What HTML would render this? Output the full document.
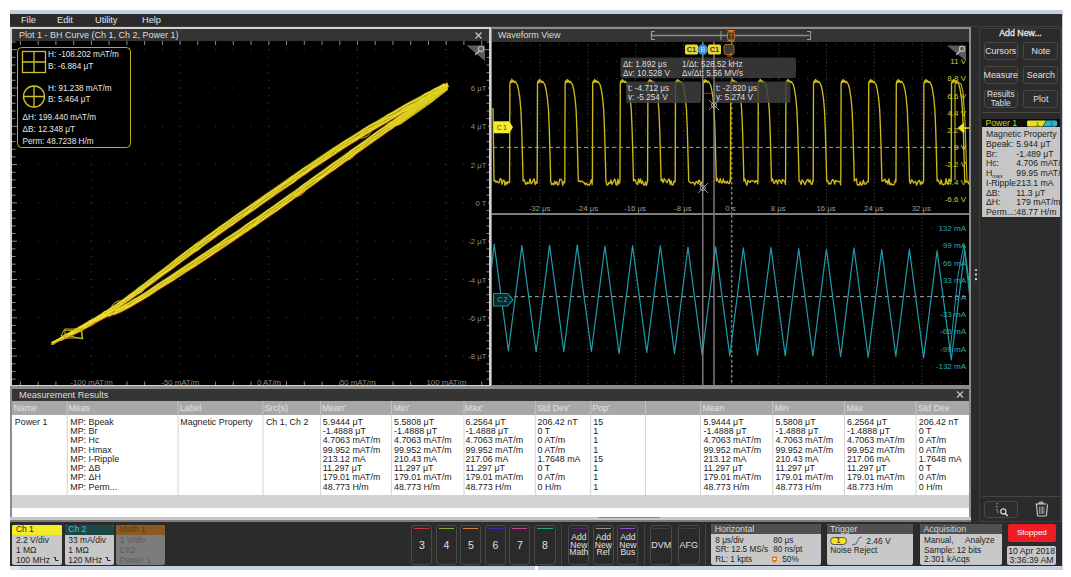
<!DOCTYPE html><html><head><meta charset="utf-8"><style>
html,body{margin:0;padding:0;}
body{width:1071px;height:577px;background:#fff;position:relative;overflow:hidden;font-family:"Liberation Sans", sans-serif;}
div,span,svg{position:absolute;box-sizing:border-box;}
svg text{font-family:"Liberation Sans", sans-serif;}
.t{white-space:pre;line-height:1.2;}

</style></head><body>
<div style="left:10px;top:10px;width:1053.2px;height:4px;background:#c5cfdf;"></div>
<div style="left:1061.6px;top:10px;width:1.6px;height:560px;background:#c5cfdf;"></div>
<div style="left:10px;top:14px;width:1051.6px;height:508px;background:#2b2b2b;"></div>
<span class="t" style="left:21px;top:15.48px;font-size:9.2px;color:#e4e4e4;">File</span>
<span class="t" style="left:57px;top:15.48px;font-size:9.2px;color:#e4e4e4;">Edit</span>
<span class="t" style="left:95px;top:15.48px;font-size:9.2px;color:#e4e4e4;">Utility</span>
<span class="t" style="left:142px;top:15.48px;font-size:9.2px;color:#e4e4e4;">Help</span>
<div style="left:10px;top:26.3px;width:1051.6px;height:1.2px;background:#3e3b38;"></div>
<div style="left:10px;top:27px;width:480.6px;height:359.3px;background:#d2d2d2;"></div>
<div style="left:12px;top:29px;width:477px;height:12px;background:#343434;"></div>
<div style="left:12px;top:41px;width:477px;height:343.8px;background:#000;"></div>
<span class="t" style="left:19px;top:30.10px;font-size:9.0px;color:#dcdcdc;">Plot 1 - BH Curve (Ch 1, Ch 2, Power 1)</span>
<svg style="left:10px;top:27px;" width="481" height="361" viewBox="10 27 481 361">
<path d="M475.5 32.5l6 6M481.5 32.5l-6 6" stroke="#c8c8c8" stroke-width="1.2"/>
<path d="M90.8 42.0h1M90.8 49.7h1M90.8 57.4h1M90.8 65.0h1M90.8 72.7h1M90.8 80.3h1M90.8 88.0h1M90.8 95.7h1M90.8 103.3h1M90.8 111.0h1M90.8 118.6h1M90.8 126.3h1M90.8 134.0h1M90.8 141.6h1M90.8 149.3h1M90.8 156.9h1M90.8 164.6h1M90.8 172.3h1M90.8 179.9h1M90.8 187.6h1M90.8 195.2h1M90.8 202.9h1M90.8 210.6h1M90.8 218.2h1M90.8 225.9h1M90.8 233.5h1M90.8 241.2h1M90.8 248.9h1M90.8 256.5h1M90.8 264.2h1M90.8 271.8h1M90.8 279.5h1M90.8 287.2h1M90.8 294.8h1M90.8 302.5h1M90.8 310.1h1M90.8 317.8h1M90.8 325.5h1M90.8 333.1h1M90.8 340.8h1M90.8 348.4h1M90.8 356.1h1M90.8 363.8h1M90.8 371.4h1M90.8 379.1h1M179.5 42.0h1M179.5 49.7h1M179.5 57.4h1M179.5 65.0h1M179.5 72.7h1M179.5 80.3h1M179.5 88.0h1M179.5 95.7h1M179.5 103.3h1M179.5 111.0h1M179.5 118.6h1M179.5 126.3h1M179.5 134.0h1M179.5 141.6h1M179.5 149.3h1M179.5 156.9h1M179.5 164.6h1M179.5 172.3h1M179.5 179.9h1M179.5 187.6h1M179.5 195.2h1M179.5 202.9h1M179.5 210.6h1M179.5 218.2h1M179.5 225.9h1M179.5 233.5h1M179.5 241.2h1M179.5 248.9h1M179.5 256.5h1M179.5 264.2h1M179.5 271.8h1M179.5 279.5h1M179.5 287.2h1M179.5 294.8h1M179.5 302.5h1M179.5 310.1h1M179.5 317.8h1M179.5 325.5h1M179.5 333.1h1M179.5 340.8h1M179.5 348.4h1M179.5 356.1h1M179.5 363.8h1M179.5 371.4h1M179.5 379.1h1M268.2 42.0h1M268.2 49.7h1M268.2 57.4h1M268.2 65.0h1M268.2 72.7h1M268.2 80.3h1M268.2 88.0h1M268.2 95.7h1M268.2 103.3h1M268.2 111.0h1M268.2 118.6h1M268.2 126.3h1M268.2 134.0h1M268.2 141.6h1M268.2 149.3h1M268.2 156.9h1M268.2 164.6h1M268.2 172.3h1M268.2 179.9h1M268.2 187.6h1M268.2 195.2h1M268.2 202.9h1M268.2 210.6h1M268.2 218.2h1M268.2 225.9h1M268.2 233.5h1M268.2 241.2h1M268.2 248.9h1M268.2 256.5h1M268.2 264.2h1M268.2 271.8h1M268.2 279.5h1M268.2 287.2h1M268.2 294.8h1M268.2 302.5h1M268.2 310.1h1M268.2 317.8h1M268.2 325.5h1M268.2 333.1h1M268.2 340.8h1M268.2 348.4h1M268.2 356.1h1M268.2 363.8h1M268.2 371.4h1M268.2 379.1h1M356.9 42.0h1M356.9 49.7h1M356.9 57.4h1M356.9 65.0h1M356.9 72.7h1M356.9 80.3h1M356.9 88.0h1M356.9 95.7h1M356.9 103.3h1M356.9 111.0h1M356.9 118.6h1M356.9 126.3h1M356.9 134.0h1M356.9 141.6h1M356.9 149.3h1M356.9 156.9h1M356.9 164.6h1M356.9 172.3h1M356.9 179.9h1M356.9 187.6h1M356.9 195.2h1M356.9 202.9h1M356.9 210.6h1M356.9 218.2h1M356.9 225.9h1M356.9 233.5h1M356.9 241.2h1M356.9 248.9h1M356.9 256.5h1M356.9 264.2h1M356.9 271.8h1M356.9 279.5h1M356.9 287.2h1M356.9 294.8h1M356.9 302.5h1M356.9 310.1h1M356.9 317.8h1M356.9 325.5h1M356.9 333.1h1M356.9 340.8h1M356.9 348.4h1M356.9 356.1h1M356.9 363.8h1M356.9 371.4h1M356.9 379.1h1M445.6 42.0h1M445.6 49.7h1M445.6 57.4h1M445.6 65.0h1M445.6 72.7h1M445.6 80.3h1M445.6 88.0h1M445.6 95.7h1M445.6 103.3h1M445.6 111.0h1M445.6 118.6h1M445.6 126.3h1M445.6 134.0h1M445.6 141.6h1M445.6 149.3h1M445.6 156.9h1M445.6 164.6h1M445.6 172.3h1M445.6 179.9h1M445.6 187.6h1M445.6 195.2h1M445.6 202.9h1M445.6 210.6h1M445.6 218.2h1M445.6 225.9h1M445.6 233.5h1M445.6 241.2h1M445.6 248.9h1M445.6 256.5h1M445.6 264.2h1M445.6 271.8h1M445.6 279.5h1M445.6 287.2h1M445.6 294.8h1M445.6 302.5h1M445.6 310.1h1M445.6 317.8h1M445.6 325.5h1M445.6 333.1h1M445.6 340.8h1M445.6 348.4h1M445.6 356.1h1M445.6 363.8h1M445.6 371.4h1M445.6 379.1h1M20.2 49.7h1M37.9 49.7h1M55.6 49.7h1M73.3 49.7h1M91.0 49.7h1M108.8 49.7h1M126.5 49.7h1M144.2 49.7h1M161.9 49.7h1M179.6 49.7h1M197.3 49.7h1M215.0 49.7h1M232.7 49.7h1M250.4 49.7h1M268.1 49.7h1M285.9 49.7h1M303.6 49.7h1M321.3 49.7h1M339.0 49.7h1M356.7 49.7h1M374.4 49.7h1M392.1 49.7h1M409.8 49.7h1M427.5 49.7h1M445.2 49.7h1M462.9 49.7h1M480.7 49.7h1M20.2 88.0h1M37.9 88.0h1M55.6 88.0h1M73.3 88.0h1M91.0 88.0h1M108.8 88.0h1M126.5 88.0h1M144.2 88.0h1M161.9 88.0h1M179.6 88.0h1M197.3 88.0h1M215.0 88.0h1M232.7 88.0h1M250.4 88.0h1M268.1 88.0h1M285.9 88.0h1M303.6 88.0h1M321.3 88.0h1M339.0 88.0h1M356.7 88.0h1M374.4 88.0h1M392.1 88.0h1M409.8 88.0h1M427.5 88.0h1M445.2 88.0h1M462.9 88.0h1M480.7 88.0h1M20.2 126.3h1M37.9 126.3h1M55.6 126.3h1M73.3 126.3h1M91.0 126.3h1M108.8 126.3h1M126.5 126.3h1M144.2 126.3h1M161.9 126.3h1M179.6 126.3h1M197.3 126.3h1M215.0 126.3h1M232.7 126.3h1M250.4 126.3h1M268.1 126.3h1M285.9 126.3h1M303.6 126.3h1M321.3 126.3h1M339.0 126.3h1M356.7 126.3h1M374.4 126.3h1M392.1 126.3h1M409.8 126.3h1M427.5 126.3h1M445.2 126.3h1M462.9 126.3h1M480.7 126.3h1M20.2 164.6h1M37.9 164.6h1M55.6 164.6h1M73.3 164.6h1M91.0 164.6h1M108.8 164.6h1M126.5 164.6h1M144.2 164.6h1M161.9 164.6h1M179.6 164.6h1M197.3 164.6h1M215.0 164.6h1M232.7 164.6h1M250.4 164.6h1M268.1 164.6h1M285.9 164.6h1M303.6 164.6h1M321.3 164.6h1M339.0 164.6h1M356.7 164.6h1M374.4 164.6h1M392.1 164.6h1M409.8 164.6h1M427.5 164.6h1M445.2 164.6h1M462.9 164.6h1M480.7 164.6h1M20.2 202.9h1M37.9 202.9h1M55.6 202.9h1M73.3 202.9h1M91.0 202.9h1M108.8 202.9h1M126.5 202.9h1M144.2 202.9h1M161.9 202.9h1M179.6 202.9h1M197.3 202.9h1M215.0 202.9h1M232.7 202.9h1M250.4 202.9h1M268.1 202.9h1M285.9 202.9h1M303.6 202.9h1M321.3 202.9h1M339.0 202.9h1M356.7 202.9h1M374.4 202.9h1M392.1 202.9h1M409.8 202.9h1M427.5 202.9h1M445.2 202.9h1M462.9 202.9h1M480.7 202.9h1M20.2 241.2h1M37.9 241.2h1M55.6 241.2h1M73.3 241.2h1M91.0 241.2h1M108.8 241.2h1M126.5 241.2h1M144.2 241.2h1M161.9 241.2h1M179.6 241.2h1M197.3 241.2h1M215.0 241.2h1M232.7 241.2h1M250.4 241.2h1M268.1 241.2h1M285.9 241.2h1M303.6 241.2h1M321.3 241.2h1M339.0 241.2h1M356.7 241.2h1M374.4 241.2h1M392.1 241.2h1M409.8 241.2h1M427.5 241.2h1M445.2 241.2h1M462.9 241.2h1M480.7 241.2h1M20.2 279.5h1M37.9 279.5h1M55.6 279.5h1M73.3 279.5h1M91.0 279.5h1M108.8 279.5h1M126.5 279.5h1M144.2 279.5h1M161.9 279.5h1M179.6 279.5h1M197.3 279.5h1M215.0 279.5h1M232.7 279.5h1M250.4 279.5h1M268.1 279.5h1M285.9 279.5h1M303.6 279.5h1M321.3 279.5h1M339.0 279.5h1M356.7 279.5h1M374.4 279.5h1M392.1 279.5h1M409.8 279.5h1M427.5 279.5h1M445.2 279.5h1M462.9 279.5h1M480.7 279.5h1M20.2 317.8h1M37.9 317.8h1M55.6 317.8h1M73.3 317.8h1M91.0 317.8h1M108.8 317.8h1M126.5 317.8h1M144.2 317.8h1M161.9 317.8h1M179.6 317.8h1M197.3 317.8h1M215.0 317.8h1M232.7 317.8h1M250.4 317.8h1M268.1 317.8h1M285.9 317.8h1M303.6 317.8h1M321.3 317.8h1M339.0 317.8h1M356.7 317.8h1M374.4 317.8h1M392.1 317.8h1M409.8 317.8h1M427.5 317.8h1M445.2 317.8h1M462.9 317.8h1M480.7 317.8h1M20.2 356.1h1M37.9 356.1h1M55.6 356.1h1M73.3 356.1h1M91.0 356.1h1M108.8 356.1h1M126.5 356.1h1M144.2 356.1h1M161.9 356.1h1M179.6 356.1h1M197.3 356.1h1M215.0 356.1h1M232.7 356.1h1M250.4 356.1h1M268.1 356.1h1M285.9 356.1h1M303.6 356.1h1M321.3 356.1h1M339.0 356.1h1M356.7 356.1h1M374.4 356.1h1M392.1 356.1h1M409.8 356.1h1M427.5 356.1h1M445.2 356.1h1M462.9 356.1h1M480.7 356.1h1" stroke="#444" stroke-width="1" fill="none"/>
<path d="M20.4 41v4M20.4 385v-3.5M38.2 41v4M38.2 385v-3.5M55.9 41v4M55.9 385v-3.5M73.7 41v4M73.7 385v-3.5M91.4 41v4M91.4 385v-3.5M109.1 41v4M109.1 385v-3.5M126.9 41v4M126.9 385v-3.5M144.6 41v4M144.6 385v-3.5M162.4 41v4M162.4 385v-3.5M180.1 41v4M180.1 385v-3.5M197.8 41v4M197.8 385v-3.5M215.6 41v4M215.6 385v-3.5M233.3 41v4M233.3 385v-3.5M251.1 41v4M251.1 385v-3.5M268.8 41v4M268.8 385v-3.5M286.5 41v4M286.5 385v-3.5M304.3 41v4M304.3 385v-3.5M322.0 41v4M322.0 385v-3.5M339.8 41v4M339.8 385v-3.5M357.5 41v4M357.5 385v-3.5M375.2 41v4M375.2 385v-3.5M393.0 41v4M393.0 385v-3.5M410.7 41v4M410.7 385v-3.5M428.5 41v4M428.5 385v-3.5M446.2 41v4M446.2 385v-3.5M463.9 41v4M463.9 385v-3.5M481.7 41v4M481.7 385v-3.5M12 42.0h3.5M489 42.0h-2.5M12 49.7h5M489 49.7h-4M12 57.4h3.5M489 57.4h-2.5M12 65.0h3.5M489 65.0h-2.5M12 72.7h3.5M489 72.7h-2.5M12 80.3h3.5M489 80.3h-2.5M12 88.0h5M489 88.0h-4M12 95.7h3.5M489 95.7h-2.5M12 103.3h3.5M489 103.3h-2.5M12 111.0h3.5M489 111.0h-2.5M12 118.6h3.5M489 118.6h-2.5M12 126.3h5M489 126.3h-4M12 134.0h3.5M489 134.0h-2.5M12 141.6h3.5M489 141.6h-2.5M12 149.3h3.5M489 149.3h-2.5M12 156.9h3.5M489 156.9h-2.5M12 164.6h5M489 164.6h-4M12 172.3h3.5M489 172.3h-2.5M12 179.9h3.5M489 179.9h-2.5M12 187.6h3.5M489 187.6h-2.5M12 195.2h3.5M489 195.2h-2.5M12 202.9h5M489 202.9h-4M12 210.6h3.5M489 210.6h-2.5M12 218.2h3.5M489 218.2h-2.5M12 225.9h3.5M489 225.9h-2.5M12 233.5h3.5M489 233.5h-2.5M12 241.2h5M489 241.2h-4M12 248.9h3.5M489 248.9h-2.5M12 256.5h3.5M489 256.5h-2.5M12 264.2h3.5M489 264.2h-2.5M12 271.8h3.5M489 271.8h-2.5M12 279.5h5M489 279.5h-4M12 287.2h3.5M489 287.2h-2.5M12 294.8h3.5M489 294.8h-2.5M12 302.5h3.5M489 302.5h-2.5M12 310.1h3.5M489 310.1h-2.5M12 317.8h5M489 317.8h-4M12 325.5h3.5M489 325.5h-2.5M12 333.1h3.5M489 333.1h-2.5M12 340.8h3.5M489 340.8h-2.5M12 348.4h3.5M489 348.4h-2.5M12 356.1h5M489 356.1h-4M12 363.8h3.5M489 363.8h-2.5M12 371.4h3.5M489 371.4h-2.5M12 379.1h3.5M489 379.1h-2.5" stroke="#8a8a8a" stroke-width="1" fill="none"/>
<rect x="469" y="83.0" width="19" height="10" fill="#000"/>
<text x="486.5" y="91.0" font-size="7.8" fill="#8c8c8c" text-anchor="end">6 μT</text>
<rect x="469" y="121.3" width="19" height="10" fill="#000"/>
<text x="486.5" y="129.3" font-size="7.8" fill="#8c8c8c" text-anchor="end">4 μT</text>
<rect x="469" y="159.6" width="19" height="10" fill="#000"/>
<text x="486.5" y="167.6" font-size="7.8" fill="#8c8c8c" text-anchor="end">2 μT</text>
<rect x="473" y="197.89999999999998" width="15" height="10" fill="#000"/>
<text x="486.5" y="205.9" font-size="7.8" fill="#8c8c8c" text-anchor="end">0 T</text>
<rect x="464" y="236.2" width="24" height="10" fill="#000"/>
<text x="486.5" y="244.2" font-size="7.8" fill="#8c8c8c" text-anchor="end">-2 μT</text>
<rect x="464" y="274.5" width="24" height="10" fill="#000"/>
<text x="486.5" y="282.5" font-size="7.8" fill="#8c8c8c" text-anchor="end">-4 μT</text>
<rect x="464" y="312.79999999999995" width="24" height="10" fill="#000"/>
<text x="486.5" y="320.8" font-size="7.8" fill="#8c8c8c" text-anchor="end">-6 μT</text>
<rect x="464" y="351.09999999999997" width="24" height="10" fill="#000"/>
<text x="486.5" y="359.1" font-size="7.8" fill="#8c8c8c" text-anchor="end">-8 μT</text>
<rect x="69.6" y="377" width="44.0" height="8" fill="#000"/>
<text x="91.6" y="384.5" font-size="7.8" fill="#8c8c8c" text-anchor="middle">-100 mAT/m</text>
<rect x="160.4" y="377" width="39.8" height="8" fill="#000"/>
<text x="180.3" y="384.5" font-size="7.8" fill="#8c8c8c" text-anchor="middle">-50 mAT/m</text>
<rect x="255.4" y="377" width="27.2" height="8" fill="#000"/>
<text x="269.0" y="384.5" font-size="7.8" fill="#8c8c8c" text-anchor="middle">0 AT/m</text>
<rect x="339.9" y="377" width="35.6" height="8" fill="#000"/>
<text x="357.7" y="384.5" font-size="7.8" fill="#8c8c8c" text-anchor="middle">50 mAT/m</text>
<rect x="426.5" y="377" width="39.8" height="8" fill="#000"/>
<text x="446.4" y="384.5" font-size="7.8" fill="#8c8c8c" text-anchor="middle">100 mAT/m</text>
<path d="M466.5 45.5H485V61z" fill="#5c5c5c"/><circle cx="481" cy="48.8" r="2.6" stroke="#bdbdbd" stroke-width="1.1" fill="none"/><path d="M479.2 50.8l-4 4" stroke="#bdbdbd" stroke-width="1.3"/>
<polygon points="52.7,344.8 54.3,343.9 56.3,342.8 58.6,341.5 61.3,340.0 64.2,338.5 67.2,336.9 70.3,335.3 73.3,333.7 76.2,332.1 79.0,330.7 81.5,329.4 84.0,328.1 86.6,326.8 89.1,325.5 91.6,324.3 94.1,323.0 96.6,321.6 99.2,320.3 101.8,318.8 104.4,317.3 106.8,315.8 109.0,314.6 111.0,313.3 113.1,312.1 115.2,310.8 117.6,309.2 120.3,307.4 123.5,305.2 127.3,302.6 131.8,299.4 137.1,295.6 143.1,291.1 149.8,286.2 157.0,280.9 164.4,275.3 172.1,269.6 179.9,263.9 187.6,258.2 195.0,252.7 202.2,247.6 209.0,242.6 215.8,237.7 222.6,232.8 229.3,228.0 236.0,223.3 242.7,218.5 249.5,213.7 256.3,209.0 263.2,204.2 270.1,199.3 277.2,194.4 284.4,189.4 291.8,184.3 299.2,179.1 306.6,174.0 314.0,169.0 321.2,164.1 328.4,159.3 335.3,154.7 342.0,150.3 348.5,146.1 355.0,142.1 361.3,138.2 367.5,134.4 373.5,130.8 379.5,127.2 385.3,123.8 390.9,120.5 396.5,117.3 401.8,114.2 407.2,111.2 412.6,108.1 418.1,105.1 423.4,102.2 428.5,99.5 433.3,96.9 437.8,94.6 441.7,92.5 445.1,90.7 447.8,89.3 444.2,82.7 441.6,84.2 438.2,86.0 434.3,88.0 429.8,90.4 425.0,93.0 419.9,95.7 414.5,98.6 409.0,101.6 403.6,104.7 398.2,107.8 392.8,110.9 387.2,114.1 381.5,117.4 375.7,120.9 369.7,124.4 363.6,128.1 357.4,131.9 351.0,135.8 344.6,139.9 338.0,144.1 331.2,148.5 324.3,153.1 317.1,157.9 309.8,162.9 302.4,167.9 295.0,173.1 287.6,178.2 280.2,183.3 273.0,188.3 265.9,193.3 258.9,198.1 252.1,202.9 245.2,207.7 238.5,212.5 231.7,217.2 225.0,222.0 218.3,226.8 211.5,231.7 204.7,236.6 197.8,241.6 190.7,246.9 183.3,252.5 175.7,258.3 168.0,264.2 160.4,270.1 153.0,275.7 146.0,281.2 139.4,286.2 133.5,290.7 128.2,294.6 123.8,297.8 120.1,300.5 117.1,302.7 114.4,304.5 112.2,306.0 110.1,307.4 108.1,308.6 106.2,309.9 104.0,311.2 101.6,312.7 99.1,314.3 96.6,315.8 94.2,317.3 91.7,318.8 89.3,320.2 86.9,321.6 84.5,323.0 82.0,324.4 79.5,325.8 77.0,327.3 74.4,328.8 71.6,330.5 68.6,332.3 65.6,334.0 62.7,335.8 59.9,337.4 57.2,338.9 54.8,340.3 52.8,341.4 51.3,342.2" fill="#5a5008"/>
<polygon points="52.6,344.8 54.2,344.1 56.2,343.1 58.5,342.0 61.2,340.8 64.1,339.6 67.1,338.2 70.2,336.8 73.3,335.5 76.2,334.1 78.9,332.7 81.5,331.4 84.1,330.0 86.6,328.6 89.2,327.2 91.7,325.7 94.1,324.3 96.6,322.9 99.2,321.5 101.7,320.2 104.2,318.9 106.5,317.8 108.6,317.0 110.5,316.4 112.5,315.8 114.6,315.1 117.0,314.2 119.8,313.1 123.1,311.6 127.0,309.6 131.5,307.1 136.8,303.9 142.9,300.2 149.6,296.1 156.8,291.6 164.2,286.9 171.9,281.9 179.7,276.9 187.4,272.0 194.9,267.1 202.0,262.5 208.9,257.9 215.7,253.4 222.5,248.9 229.2,244.4 235.9,239.8 242.7,235.2 249.5,230.6 256.3,225.9 263.2,221.2 270.1,216.3 277.2,211.4 284.5,206.2 291.8,201.0 299.2,195.7 306.7,190.3 314.0,185.0 321.3,179.8 328.5,174.6 335.4,169.6 342.2,164.8 348.7,160.1 355.1,155.5 361.5,151.0 367.7,146.6 373.8,142.3 379.7,138.0 385.6,133.9 391.2,129.8 396.8,125.9 402.2,122.0 407.5,118.2 413.0,114.3 418.4,110.3 423.8,106.5 428.9,102.8 433.7,99.4 438.2,96.2 442.1,93.3 445.5,90.9 448.2,89.0 443.8,83.0 441.2,84.9 437.8,87.3 433.9,90.2 429.4,93.3 424.6,96.8 419.5,100.5 414.1,104.3 408.7,108.2 403.2,112.1 397.8,116.0 392.5,119.8 386.9,123.8 381.3,127.8 375.4,132.0 369.5,136.2 363.4,140.6 357.2,145.0 350.8,149.5 344.4,154.1 337.8,158.8 331.1,163.6 324.1,168.6 317.0,173.8 309.7,179.0 302.3,184.3 294.9,189.7 287.5,195.0 280.2,200.2 273.0,205.3 265.9,210.3 258.9,215.1 252.1,219.8 245.3,224.5 238.5,229.1 231.8,233.7 225.1,238.2 218.4,242.7 211.6,247.3 204.8,251.8 198.0,256.3 190.9,261.1 183.5,266.0 175.9,271.1 168.2,276.3 160.6,281.3 153.2,286.2 146.2,290.8 139.6,295.0 133.7,298.7 128.5,301.9 124.1,304.5 120.5,306.4 117.5,307.8 115.0,308.9 112.8,309.8 110.7,310.5 108.7,311.1 106.6,311.9 104.3,312.9 101.8,314.1 99.2,315.6 96.6,317.1 94.1,318.6 91.7,320.2 89.2,321.7 86.8,323.3 84.4,324.8 82.0,326.4 79.5,327.8 77.1,329.3 74.5,330.7 71.6,332.2 68.7,333.7 65.7,335.3 62.8,336.8 60.0,338.2 57.3,339.4 54.9,340.5 52.9,341.5 51.4,342.2" fill="#5a5008"/>
<polygon points="52.4,344.2 53.9,343.3 55.9,342.2 58.3,340.9 60.9,339.4 63.9,337.9 66.9,336.3 70.0,334.7 73.0,333.1 75.9,331.5 78.6,330.1 81.2,328.8 83.7,327.5 86.2,326.2 88.7,324.9 91.2,323.7 93.7,322.4 96.3,321.0 98.8,319.7 101.4,318.2 104.0,316.7 106.5,315.2 108.6,314.0 110.7,312.7 112.7,311.5 114.8,310.2 117.2,308.6 119.9,306.8 123.1,304.7 126.9,302.0 131.3,298.8 136.7,295.0 142.7,290.6 149.4,285.6 156.5,280.3 164.0,274.8 171.7,269.1 179.5,263.3 187.1,257.7 194.6,252.2 201.8,247.0 208.6,242.0 215.4,237.1 222.2,232.3 228.9,227.5 235.6,222.7 242.3,217.9 249.1,213.2 255.9,208.4 262.8,203.6 269.7,198.8 276.8,193.8 284.0,188.8 291.4,183.7 298.8,178.6 306.2,173.5 313.6,168.4 320.8,163.5 328.0,158.7 334.9,154.1 341.6,149.7 348.2,145.5 354.6,141.5 360.9,137.6 367.1,133.8 373.2,130.2 379.1,126.6 384.9,123.2 390.6,119.9 396.1,116.7 401.5,113.6 406.8,110.5 412.3,107.5 417.7,104.5 423.0,101.6 428.2,98.9 433.0,96.3 437.4,94.0 441.4,91.9 444.7,90.1 447.4,88.6 444.6,83.4 441.9,84.8 438.6,86.6 434.6,88.7 430.2,91.0 425.3,93.6 420.2,96.4 414.8,99.3 409.4,102.3 403.9,105.3 398.5,108.4 393.1,111.5 387.6,114.7 381.9,118.0 376.1,121.5 370.1,125.0 364.0,128.7 357.8,132.5 351.4,136.4 344.9,140.5 338.4,144.7 331.6,149.1 324.6,153.7 317.5,158.5 310.2,163.5 302.8,168.5 295.4,173.6 288.0,178.8 280.6,183.9 273.4,188.9 266.3,193.8 259.3,198.7 252.5,203.5 245.6,208.3 238.9,213.0 232.1,217.8 225.4,222.6 218.7,227.4 211.9,232.3 205.1,237.2 198.2,242.2 191.1,247.5 183.7,253.1 176.1,258.9 168.5,264.8 160.9,270.6 153.5,276.3 146.4,281.7 139.8,286.7 133.9,291.3 128.7,295.2 124.2,298.4 120.6,301.1 117.4,303.3 114.8,305.1 112.5,306.6 110.5,308.0 108.5,309.2 106.5,310.5 104.4,311.8 102.0,313.3 99.4,314.9 97.0,316.4 94.5,317.9 92.1,319.4 89.7,320.8 87.2,322.2 84.8,323.6 82.4,325.0 79.9,326.4 77.4,327.9 74.7,329.5 71.9,331.1 69.0,332.9 66.0,334.6 63.0,336.4 60.2,338.1 57.6,339.5 55.2,340.9 53.2,342.0 51.6,342.8" fill="#b8aa14"/>
<polygon points="52.3,344.2 53.9,343.4 55.9,342.5 58.2,341.4 60.9,340.2 63.8,338.9 66.8,337.6 69.9,336.2 72.9,334.8 75.9,333.5 78.6,332.1 81.2,330.8 83.7,329.4 86.3,328.0 88.8,326.6 91.3,325.1 93.8,323.7 96.3,322.3 98.8,320.9 101.3,319.6 103.9,318.3 106.2,317.2 108.3,316.4 110.3,315.7 112.2,315.1 114.4,314.4 116.8,313.5 119.6,312.4 122.8,310.9 126.6,309.0 131.2,306.5 136.5,303.3 142.5,299.6 149.2,295.5 156.4,291.0 163.9,286.3 171.6,281.4 179.3,276.4 187.0,271.4 194.5,266.5 201.7,261.9 208.5,257.4 215.3,252.8 222.1,248.3 228.8,243.8 235.6,239.2 242.3,234.7 249.1,230.0 255.9,225.4 262.8,220.6 269.7,215.8 276.8,210.8 284.1,205.7 291.4,200.4 298.8,195.1 306.3,189.8 313.6,184.5 320.9,179.2 328.1,174.1 335.0,169.1 341.7,164.2 348.3,159.6 354.7,155.0 361.1,150.5 367.3,146.0 373.4,141.7 379.3,137.4 385.1,133.3 390.8,129.2 396.4,125.3 401.7,121.4 407.1,117.6 412.6,113.7 418.0,109.8 423.4,105.9 428.5,102.3 433.3,98.8 437.8,95.6 441.7,92.8 445.1,90.4 447.7,88.4 444.3,83.6 441.6,85.5 438.2,87.9 434.3,90.7 429.8,93.9 425.0,97.4 419.9,101.1 414.5,104.9 409.1,108.8 403.6,112.7 398.3,116.6 392.9,120.4 387.3,124.4 381.7,128.4 375.8,132.6 369.9,136.8 363.8,141.1 357.6,145.6 351.2,150.1 344.8,154.7 338.3,159.4 331.5,164.2 324.6,169.2 317.4,174.3 310.1,179.6 302.7,184.9 295.3,190.2 287.9,195.5 280.6,200.8 273.4,205.9 266.3,210.8 259.3,215.7 252.5,220.4 245.7,225.1 238.9,229.7 232.2,234.3 225.5,238.8 218.8,243.3 212.0,247.8 205.2,252.4 198.3,256.9 191.3,261.7 183.9,266.6 176.3,271.7 168.6,276.8 161.0,281.9 153.6,286.8 146.6,291.4 140.0,295.6 134.1,299.3 128.8,302.5 124.5,305.1 120.8,307.0 117.8,308.5 115.2,309.6 113.0,310.4 110.9,311.1 108.9,311.8 106.9,312.6 104.6,313.5 102.1,314.7 99.5,316.2 97.0,317.7 94.5,319.2 92.0,320.8 89.6,322.3 87.2,323.9 84.7,325.4 82.3,327.0 79.9,328.4 77.4,329.9 74.8,331.3 72.0,332.8 69.0,334.4 66.0,335.9 63.1,337.4 60.3,338.8 57.6,340.1 55.2,341.2 53.2,342.1 51.7,342.8" fill="#b8aa14"/>
<polyline points="52.1,343.7 54.0,343.4 56.0,342.2 58.1,340.5 60.9,339.2 63.7,337.6 66.8,336.2 70.0,334.7 72.7,332.5 75.5,330.9 78.6,330.1 81.0,328.4 83.7,327.4 85.8,325.4 88.5,324.5 91.1,323.5 93.4,321.7 96.3,321.0 98.8,319.6 100.9,317.4 103.5,315.9 106.2,314.8 108.6,313.9 110.3,312.2 112.3,310.8 114.5,309.7 116.6,307.8 119.4,306.2 122.7,304.2 126.5,301.6 130.8,298.2 136.1,294.3 142.2,289.9 149.0,285.1 156.0,279.7 163.3,273.9 171.5,268.8 179.1,262.8 186.8,257.2 194.0,251.3 201.6,246.8 208.4,241.7 214.8,236.2 221.6,231.5 228.6,227.0 235.3,222.3 242.2,217.7 248.6,212.5 255.7,208.1 262.4,203.1 269.2,198.0 276.4,193.3 283.8,188.5 291.2,183.4 298.4,178.0 305.8,172.9 312.9,167.4 320.3,162.7 327.7,158.3 334.5,153.4 341.0,148.8 347.8,144.9 354.3,141.0 360.6,137.1 366.6,133.1 372.7,129.5 378.7,126.0 384.7,122.8 390.2,119.3 395.7,116.0 401.1,112.9 406.2,109.5 411.7,106.5 417.5,104.0 422.9,101.4 427.9,98.3 432.6,95.6 436.9,93.0 441.0,91.2 444.6,89.8 447.2,88.2" stroke="#f4e838" stroke-width="1.2" fill="none"/>
<polyline points="51.6,342.8 53.3,342.2 55.2,340.9 57.7,339.8 60.4,338.3 62.9,336.2 65.8,334.4 69.2,333.4 71.9,331.2 74.8,329.5 77.8,328.6 80.0,326.7 82.7,325.6 85.0,323.9 87.5,322.6 89.7,320.8 92.3,319.9 94.9,318.6 97.2,316.9 99.8,315.5 102.3,313.9 104.4,311.8 106.9,311.1 108.8,309.7 110.7,308.2 112.6,306.7 115.3,305.8 117.7,303.7 121.0,301.7 124.8,299.2 129.1,295.8 134.5,292.1 140.1,287.1 147.0,282.4 153.8,276.8 161.5,271.5 169.1,265.6 176.3,259.1 183.9,253.4 191.4,247.8 198.9,243.2 205.5,237.7 212.4,233.0 219.0,227.8 225.9,223.2 232.5,218.3 239.2,213.5 246.1,208.9 252.9,204.2 260.0,199.6 266.8,194.6 274.1,189.9 281.3,184.8 288.7,179.8 295.9,174.4 303.0,168.9 310.8,164.4 318.2,159.5 325.3,154.7 332.1,149.8 338.9,145.5 345.2,140.9 352.0,137.3 358.2,133.2 364.3,129.1 370.2,125.3 376.6,122.4 382.5,119.1 387.7,115.0 393.6,112.4 398.8,109.0 404.1,105.7 409.6,102.7 415.3,100.2 420.7,97.3 425.5,93.9 430.6,91.8 434.8,88.9 439.0,87.4 442.2,85.3 445.1,84.4" stroke="#f0e030" stroke-width="1.2" fill="none"/>
<polyline points="52.0,343.5 53.5,342.5 55.3,341.0 58.3,340.8 60.2,338.0 63.5,337.2 66.8,336.2 69.1,333.2 72.5,332.3 75.5,330.8 77.7,328.4 80.5,327.5 83.3,326.7 85.5,324.9 88.2,324.0 90.2,321.8 92.8,320.6 95.1,319.0 98.0,318.2 100.9,317.4 103.2,315.3 105.8,314.1 107.6,312.2 109.9,311.5 111.3,309.3 113.6,308.3 116.3,307.3 119.0,305.6 121.9,302.9 125.2,299.8 129.9,296.8 135.1,292.9 141.2,288.5 148.4,284.3 154.8,278.1 163.0,273.5 170.7,267.7 177.5,260.7 185.5,255.4 193.1,250.1 199.7,244.1 207.0,239.7 214.3,235.5 220.2,229.5 227.4,225.4 233.7,219.9 240.9,215.8 248.0,211.5 254.0,205.8 260.7,200.7 267.7,195.9 275.3,191.7 282.0,185.9 289.4,180.9 297.3,176.3 305.1,171.9 312.0,166.1 319.2,161.1 326.6,156.7 333.0,151.2 340.2,147.6 346.4,142.8 353.3,139.4 359.9,136.0 365.3,130.8 371.8,127.9 377.8,124.5 383.2,120.3 389.0,117.2 395.2,115.1 400.6,112.0 405.2,107.6 411.2,105.5 416.8,102.9 421.5,98.8 427.0,96.7 431.3,93.2 436.0,91.4 440.3,89.8 443.5,87.8 446.4,86.7" stroke="#ecdf30" stroke-width="1.1" fill="none"/>
<polyline points="52.4,344.1 53.9,343.2 56.0,342.3 58.2,340.7 61.0,339.5 63.9,337.9 66.8,336.1 70.0,334.8 72.9,332.9 75.9,331.6 78.6,330.0 81.1,328.7 83.8,327.6 86.4,326.5 88.7,324.9 91.2,323.7 93.9,322.6 96.5,321.4 98.9,319.9 101.5,318.3 104.3,317.1 106.4,315.2 108.9,314.3 110.7,312.8 112.7,311.5 114.8,310.2 117.3,308.7 120.1,307.2 123.1,304.7 127.0,302.2 131.5,299.1 136.7,295.1 142.9,290.8 149.4,285.6 156.5,280.3 164.1,274.8 171.9,269.4 179.6,263.5 187.2,257.8 194.8,252.5 201.9,247.2 208.7,242.2 215.7,237.5 222.4,232.6 229.0,227.6 235.8,223.0 242.5,218.2 249.4,213.6 256.1,208.8 262.9,203.7 270.1,199.2 276.8,193.9 284.2,189.0 291.7,184.1 298.8,178.6 306.4,173.7 313.6,168.4 321.1,163.8 328.2,159.1 335.1,154.4 341.9,150.2 348.3,145.7 354.8,141.9 361.1,137.9 367.3,134.1 373.3,130.4 379.4,127.1 385.2,123.7 390.7,120.2 396.3,117.0 401.5,113.6 407.1,110.9 412.5,107.8 418.0,105.0 423.3,102.1 428.2,99.0 433.1,96.5 437.6,94.3 441.4,91.9 444.9,90.3 447.5,88.7" stroke="#c84810" stroke-width="0.8" fill="none"/>
<polyline points="52.4,344.4 54.0,343.7 55.6,341.9 58.0,340.9 61.0,340.3 63.8,338.9 66.8,337.5 69.7,335.8 72.9,334.7 75.8,333.3 78.5,331.9 80.9,330.2 83.5,329.0 86.0,327.6 88.7,326.4 91.3,325.2 93.8,323.7 96.1,321.9 98.5,320.4 101.0,318.9 103.5,317.4 105.8,316.3 108.1,315.9 110.0,315.1 112.0,314.5 114.3,314.3 116.6,313.1 119.4,312.0 122.4,310.2 126.1,308.1 130.8,305.8 136.0,302.5 142.2,299.1 149.2,295.4 156.1,290.6 163.3,285.5 171.4,281.1 179.1,276.0 186.7,271.0 194.3,266.3 201.4,261.5 208.3,257.0 214.8,252.1 221.9,248.1 228.7,243.5 234.9,238.3 242.0,234.2 248.8,229.6 255.4,224.7 262.3,220.0 269.3,215.1 276.6,210.5 283.6,205.0 291.2,200.1 298.3,194.4 306.0,189.5 313.4,184.2 320.4,178.6 327.7,173.5 334.8,168.8 341.4,163.8 347.8,158.9 354.1,154.1 360.5,149.7 367.0,145.6 372.7,140.8 379.1,137.2 384.6,132.5 390.6,129.0 395.8,124.5 401.6,121.2 406.8,117.2 412.1,113.1 417.6,109.2 423.0,105.5 428.1,101.7 432.8,98.0 437.2,94.8 441.3,92.2 444.9,90.1 447.4,87.9" stroke="#f4e838" stroke-width="1.2" fill="none"/>
<polyline points="51.6,342.8 53.1,341.9 55.3,341.2 57.5,339.9 60.1,338.6 63.1,337.5 66.3,336.5 69.3,334.9 72.2,333.3 74.8,331.3 77.6,330.2 79.9,328.5 82.3,327.0 84.7,325.4 87.2,324.0 90.0,323.0 92.4,321.4 94.9,319.8 97.3,318.3 99.6,316.3 102.2,315.0 104.9,314.1 107.1,313.3 109.2,312.6 111.2,312.0 113.0,310.5 115.5,310.2 118.1,309.1 121.1,307.5 124.6,305.3 129.1,303.0 134.1,299.5 140.6,296.5 147.1,292.2 154.0,287.3 161.3,282.3 169.2,277.8 176.7,272.4 184.5,267.5 191.9,262.6 198.8,257.5 205.6,252.9 212.5,248.5 219.1,243.9 225.7,239.1 232.5,234.7 239.5,230.6 245.8,225.3 252.6,220.7 259.8,216.4 266.6,211.3 273.8,206.5 281.0,201.3 288.3,196.0 296.1,191.2 303.0,185.3 310.5,180.1 317.7,174.7 325.1,169.9 331.8,164.6 338.6,159.9 345.4,155.5 351.6,150.5 358.1,146.2 364.5,142.1 370.1,137.1 376.0,132.8 381.9,128.8 387.9,125.2 393.4,121.1 398.5,117.0 404.0,113.2 409.3,109.2 414.9,105.5 420.0,101.3 425.6,98.2 430.5,94.8 435.0,91.7 438.8,88.7 442.3,86.5 444.4,83.8" stroke="#f0e030" stroke-width="1.2" fill="none"/>
<polyline points="52.1,343.7 53.5,342.7 55.6,342.0 57.7,340.3 60.8,340.1 63.7,338.8 66.6,337.1 69.2,334.8 72.5,334.0 75.2,332.2 77.8,330.7 81.0,330.4 83.6,329.1 85.2,326.1 88.4,325.9 90.6,324.0 92.9,322.2 95.3,320.5 98.1,319.7 100.5,318.0 103.2,317.0 105.6,315.8 107.4,314.0 109.8,314.4 111.9,314.1 114.0,313.4 116.2,312.0 118.4,309.9 121.5,308.4 125.3,306.6 130.5,305.4 135.2,301.2 141.3,297.6 148.4,294.2 155.0,288.8 162.6,284.4 170.2,279.2 177.5,273.6 185.7,269.4 193.4,264.9 199.8,259.1 206.8,254.7 213.7,250.4 220.1,245.4 227.3,241.5 234.4,237.5 240.9,232.7 247.6,227.9 254.7,223.7 260.9,217.9 268.2,213.6 275.1,208.4 282.6,203.6 289.5,197.6 297.6,193.3 304.3,187.0 311.7,181.8 319.7,177.5 327.0,172.5 333.4,166.8 340.1,161.9 346.5,157.0 352.9,152.4 359.6,148.4 365.4,143.4 371.4,138.9 377.7,135.2 383.2,130.6 389.4,127.3 395.1,123.6 400.5,119.7 405.5,115.4 410.8,111.3 416.4,107.5 421.3,103.0 427.1,100.4 431.6,96.4 436.0,93.1 439.7,90.0 443.4,88.1 446.3,86.4" stroke="#ecdf30" stroke-width="1.1" fill="none"/>
<polyline points="52.3,344.1 54.0,343.8 55.8,342.4 58.3,341.6 60.8,340.0 63.8,338.9 67.0,337.9 69.9,336.1 73.0,335.0 75.9,333.5 78.6,332.2 81.3,330.9 83.7,329.4 86.5,328.3 88.7,326.5 91.3,325.1 93.7,323.6 96.3,322.3 98.9,321.0 101.5,319.9 104.0,318.4 106.2,317.2 108.3,316.4 110.4,316.2 112.2,315.0 114.5,314.7 116.8,313.7 119.7,312.7 122.8,311.1 126.8,309.3 131.3,306.7 136.7,303.6 142.8,300.1 149.4,295.8 156.4,291.1 163.9,286.3 171.8,281.8 179.5,276.6 187.1,271.5 194.8,267.0 201.8,262.2 208.8,257.7 215.6,253.3 222.2,248.4 228.9,244.0 235.9,239.7 242.3,234.7 249.3,230.4 255.9,225.4 263.0,220.9 270.0,216.1 277.1,211.2 284.4,206.1 291.6,200.7 298.9,195.2 306.3,189.9 313.8,184.7 321.1,179.5 328.1,174.1 335.3,169.5 341.9,164.5 348.5,159.9 354.8,155.1 361.1,150.6 367.3,146.0 373.5,141.9 379.4,137.6 385.3,133.5 391.0,129.4 396.7,125.7 402.1,121.9 407.2,117.7 412.7,113.9 418.1,109.9 423.6,106.3 428.8,102.7 433.4,98.9 438.0,96.0 441.8,92.9 445.1,90.4 448.0,88.8" stroke="#c84810" stroke-width="0.8" fill="none"/>
<ellipse cx="117" cy="305" rx="6" ry="3" transform="rotate(-33 117 305)" stroke="#d8cc20" stroke-width="0.9" fill="none"/>
<ellipse cx="140" cy="290" rx="5" ry="2.6" transform="rotate(-33 140 290)" stroke="#d8cc20" stroke-width="0.9" fill="none"/>
<ellipse cx="197" cy="247" rx="6" ry="3.2" transform="rotate(-36 197 247)" stroke="#d8cc20" stroke-width="0.9" fill="none"/>
<ellipse cx="232" cy="222" rx="5" ry="2.8" transform="rotate(-36 232 222)" stroke="#d8cc20" stroke-width="0.9" fill="none"/>
<ellipse cx="292" cy="180" rx="6" ry="3" transform="rotate(-34 292 180)" stroke="#d8cc20" stroke-width="0.9" fill="none"/>
<ellipse cx="333" cy="152" rx="5" ry="2.6" transform="rotate(-33 333 152)" stroke="#d8cc20" stroke-width="0.9" fill="none"/>
<ellipse cx="365" cy="134" rx="6" ry="3" transform="rotate(-30 365 134)" stroke="#d8cc20" stroke-width="0.9" fill="none"/>
<ellipse cx="255" cy="223" rx="5" ry="2.6" transform="rotate(-35 255 223)" stroke="#d8cc20" stroke-width="0.9" fill="none"/>
<ellipse cx="300" cy="192" rx="6" ry="3" transform="rotate(-35 300 192)" stroke="#d8cc20" stroke-width="0.9" fill="none"/>
<ellipse cx="350" cy="156" rx="5" ry="2.8" transform="rotate(-35 350 156)" stroke="#d8cc20" stroke-width="0.9" fill="none"/>
<ellipse cx="390" cy="126" rx="6" ry="3.2" transform="rotate(-35 390 126)" stroke="#d8cc20" stroke-width="0.9" fill="none"/>
<path d="M385 128L420 100L446 84L448 90L430 104L400 125z" fill="#dccf1e" fill-opacity="0.85"/>
<path d="M441 90L447 82L449 87z" fill="#f0d020"/>
<circle cx="430" cy="98" r="4" stroke="#d8c818" stroke-width="1" fill="none"/>
<path d="M51 344.5L66 337M64 330l-3 6h9l13 3l-2-8z" stroke="#c8b818" stroke-width="1" fill="none"/>
<rect x="65" y="329" width="17" height="9" stroke="#c8b818" stroke-width="1" fill="none"/>
<rect x="17.5" y="47.5" width="113" height="100" rx="4" stroke="#bfae1a" stroke-width="1" fill="#000"/>
<rect x="22.5" y="51.5" width="23" height="21" stroke="#d0c020" stroke-width="1.3" fill="none"/><path d="M34 51.5v21M22.5 62h23" stroke="#d0c020" stroke-width="1.3"/>
<circle cx="34" cy="96.5" r="10.5" stroke="#d0c020" stroke-width="1.3" fill="none"/><path d="M34 86v21M23.5 96.5h21" stroke="#d0c020" stroke-width="1.3"/>
<text x="48" y="57.4" font-size="8.2" fill="#e8e8e8">H: -108.202 mAT/m</text>
<text x="48" y="69" font-size="8.2" fill="#e8e8e8">B: -6.884 μT</text>
<text x="48" y="91.3" font-size="8.2" fill="#e8e8e8">H: 91.238 mAT/m</text>
<text x="48" y="102.4" font-size="8.2" fill="#e8e8e8">B: 5.464 μT</text>
<text x="22.5" y="120.2" font-size="8.2" fill="#e8e8e8">ΔH: 199.440 mAT/m</text>
<text x="22.5" y="131.7" font-size="8.2" fill="#e8e8e8">ΔB: 12.348 μT</text>
<text x="22.5" y="143.7" font-size="8.2" fill="#e8e8e8">Perm: 48.7238 H/m</text>
</svg>
<div style="left:491px;top:27px;width:480px;height:362px;background:#8c8c8c;"></div>
<div style="left:492px;top:29px;width:477px;height:13px;background:#343434;"></div>
<div style="left:492px;top:42px;width:477px;height:171px;background:#000;"></div>
<div style="left:492px;top:214.5px;width:477px;height:170.5px;background:#000;"></div>
<span class="t" style="left:498px;top:30.10px;font-size:9.0px;color:#dcdcdc;">Waveform View</span>
<svg style="left:491px;top:27px;" width="480" height="362" viewBox="491 27 480 362">
<path d="M655 31.5h-3.5v8h3.5M807 31.5h3.5v8h-3.5" stroke="#9a9a9a" stroke-width="1.2" fill="none"/>
<path d="M652 35.5h157" stroke="#8a8a8a" stroke-width="1.5"/>
<path d="M721 31v9" stroke="#9a9a9a" stroke-width="1"/>
<path d="M726.5 30h9l-4.5 3z M726.5 41.5h9l-4.5 -3z" fill="#e07818"/>
<rect x="727.5" y="32" width="7" height="8" rx="1.5" fill="#3a3a3a" stroke="#d07018" stroke-width="1"/>
<text x="731" y="38.8" font-size="6.5" fill="#e08020" text-anchor="middle">T</text>
<path d="M539.6 45.4h1M539.6 218.4h1M539.6 48.9h1M539.6 221.9h1M539.6 52.3h1M539.6 225.3h1M539.6 55.8h1M539.6 228.8h1M539.6 59.2h1M539.6 232.2h1M539.6 62.6h1M539.6 235.6h1M539.6 66.1h1M539.6 239.1h1M539.6 69.5h1M539.6 242.5h1M539.6 73.0h1M539.6 246.0h1M539.6 76.4h1M539.6 249.4h1M539.6 79.8h1M539.6 252.8h1M539.6 83.3h1M539.6 256.3h1M539.6 86.7h1M539.6 259.7h1M539.6 90.2h1M539.6 263.2h1M539.6 93.6h1M539.6 266.6h1M539.6 97.0h1M539.6 270.0h1M539.6 100.5h1M539.6 273.5h1M539.6 103.9h1M539.6 276.9h1M539.6 107.4h1M539.6 280.4h1M539.6 110.8h1M539.6 283.8h1M539.6 114.2h1M539.6 287.2h1M539.6 117.7h1M539.6 290.7h1M539.6 121.1h1M539.6 294.1h1M539.6 124.6h1M539.6 297.6h1M539.6 128.0h1M539.6 301.0h1M539.6 131.4h1M539.6 304.4h1M539.6 134.9h1M539.6 307.9h1M539.6 138.3h1M539.6 311.3h1M539.6 141.8h1M539.6 314.8h1M539.6 145.2h1M539.6 318.2h1M539.6 148.6h1M539.6 321.6h1M539.6 152.1h1M539.6 325.1h1M539.6 155.5h1M539.6 328.5h1M539.6 159.0h1M539.6 332.0h1M539.6 162.4h1M539.6 335.4h1M539.6 165.8h1M539.6 338.8h1M539.6 169.3h1M539.6 342.3h1M539.6 172.7h1M539.6 345.7h1M539.6 176.2h1M539.6 349.2h1M539.6 179.6h1M539.6 352.6h1M539.6 183.0h1M539.6 356.0h1M539.6 186.5h1M539.6 359.5h1M539.6 189.9h1M539.6 362.9h1M539.6 193.4h1M539.6 366.4h1M539.6 196.8h1M539.6 369.8h1M539.6 200.2h1M539.6 373.2h1M539.6 203.7h1M539.6 376.7h1M539.6 207.1h1M539.6 380.1h1M539.6 210.6h1M539.6 383.6h1M587.3 45.4h1M587.3 218.4h1M587.3 48.9h1M587.3 221.9h1M587.3 52.3h1M587.3 225.3h1M587.3 55.8h1M587.3 228.8h1M587.3 59.2h1M587.3 232.2h1M587.3 62.6h1M587.3 235.6h1M587.3 66.1h1M587.3 239.1h1M587.3 69.5h1M587.3 242.5h1M587.3 73.0h1M587.3 246.0h1M587.3 76.4h1M587.3 249.4h1M587.3 79.8h1M587.3 252.8h1M587.3 83.3h1M587.3 256.3h1M587.3 86.7h1M587.3 259.7h1M587.3 90.2h1M587.3 263.2h1M587.3 93.6h1M587.3 266.6h1M587.3 97.0h1M587.3 270.0h1M587.3 100.5h1M587.3 273.5h1M587.3 103.9h1M587.3 276.9h1M587.3 107.4h1M587.3 280.4h1M587.3 110.8h1M587.3 283.8h1M587.3 114.2h1M587.3 287.2h1M587.3 117.7h1M587.3 290.7h1M587.3 121.1h1M587.3 294.1h1M587.3 124.6h1M587.3 297.6h1M587.3 128.0h1M587.3 301.0h1M587.3 131.4h1M587.3 304.4h1M587.3 134.9h1M587.3 307.9h1M587.3 138.3h1M587.3 311.3h1M587.3 141.8h1M587.3 314.8h1M587.3 145.2h1M587.3 318.2h1M587.3 148.6h1M587.3 321.6h1M587.3 152.1h1M587.3 325.1h1M587.3 155.5h1M587.3 328.5h1M587.3 159.0h1M587.3 332.0h1M587.3 162.4h1M587.3 335.4h1M587.3 165.8h1M587.3 338.8h1M587.3 169.3h1M587.3 342.3h1M587.3 172.7h1M587.3 345.7h1M587.3 176.2h1M587.3 349.2h1M587.3 179.6h1M587.3 352.6h1M587.3 183.0h1M587.3 356.0h1M587.3 186.5h1M587.3 359.5h1M587.3 189.9h1M587.3 362.9h1M587.3 193.4h1M587.3 366.4h1M587.3 196.8h1M587.3 369.8h1M587.3 200.2h1M587.3 373.2h1M587.3 203.7h1M587.3 376.7h1M587.3 207.1h1M587.3 380.1h1M587.3 210.6h1M587.3 383.6h1M635.1 45.4h1M635.1 218.4h1M635.1 48.9h1M635.1 221.9h1M635.1 52.3h1M635.1 225.3h1M635.1 55.8h1M635.1 228.8h1M635.1 59.2h1M635.1 232.2h1M635.1 62.6h1M635.1 235.6h1M635.1 66.1h1M635.1 239.1h1M635.1 69.5h1M635.1 242.5h1M635.1 73.0h1M635.1 246.0h1M635.1 76.4h1M635.1 249.4h1M635.1 79.8h1M635.1 252.8h1M635.1 83.3h1M635.1 256.3h1M635.1 86.7h1M635.1 259.7h1M635.1 90.2h1M635.1 263.2h1M635.1 93.6h1M635.1 266.6h1M635.1 97.0h1M635.1 270.0h1M635.1 100.5h1M635.1 273.5h1M635.1 103.9h1M635.1 276.9h1M635.1 107.4h1M635.1 280.4h1M635.1 110.8h1M635.1 283.8h1M635.1 114.2h1M635.1 287.2h1M635.1 117.7h1M635.1 290.7h1M635.1 121.1h1M635.1 294.1h1M635.1 124.6h1M635.1 297.6h1M635.1 128.0h1M635.1 301.0h1M635.1 131.4h1M635.1 304.4h1M635.1 134.9h1M635.1 307.9h1M635.1 138.3h1M635.1 311.3h1M635.1 141.8h1M635.1 314.8h1M635.1 145.2h1M635.1 318.2h1M635.1 148.6h1M635.1 321.6h1M635.1 152.1h1M635.1 325.1h1M635.1 155.5h1M635.1 328.5h1M635.1 159.0h1M635.1 332.0h1M635.1 162.4h1M635.1 335.4h1M635.1 165.8h1M635.1 338.8h1M635.1 169.3h1M635.1 342.3h1M635.1 172.7h1M635.1 345.7h1M635.1 176.2h1M635.1 349.2h1M635.1 179.6h1M635.1 352.6h1M635.1 183.0h1M635.1 356.0h1M635.1 186.5h1M635.1 359.5h1M635.1 189.9h1M635.1 362.9h1M635.1 193.4h1M635.1 366.4h1M635.1 196.8h1M635.1 369.8h1M635.1 200.2h1M635.1 373.2h1M635.1 203.7h1M635.1 376.7h1M635.1 207.1h1M635.1 380.1h1M635.1 210.6h1M635.1 383.6h1M682.8 45.4h1M682.8 218.4h1M682.8 48.9h1M682.8 221.9h1M682.8 52.3h1M682.8 225.3h1M682.8 55.8h1M682.8 228.8h1M682.8 59.2h1M682.8 232.2h1M682.8 62.6h1M682.8 235.6h1M682.8 66.1h1M682.8 239.1h1M682.8 69.5h1M682.8 242.5h1M682.8 73.0h1M682.8 246.0h1M682.8 76.4h1M682.8 249.4h1M682.8 79.8h1M682.8 252.8h1M682.8 83.3h1M682.8 256.3h1M682.8 86.7h1M682.8 259.7h1M682.8 90.2h1M682.8 263.2h1M682.8 93.6h1M682.8 266.6h1M682.8 97.0h1M682.8 270.0h1M682.8 100.5h1M682.8 273.5h1M682.8 103.9h1M682.8 276.9h1M682.8 107.4h1M682.8 280.4h1M682.8 110.8h1M682.8 283.8h1M682.8 114.2h1M682.8 287.2h1M682.8 117.7h1M682.8 290.7h1M682.8 121.1h1M682.8 294.1h1M682.8 124.6h1M682.8 297.6h1M682.8 128.0h1M682.8 301.0h1M682.8 131.4h1M682.8 304.4h1M682.8 134.9h1M682.8 307.9h1M682.8 138.3h1M682.8 311.3h1M682.8 141.8h1M682.8 314.8h1M682.8 145.2h1M682.8 318.2h1M682.8 148.6h1M682.8 321.6h1M682.8 152.1h1M682.8 325.1h1M682.8 155.5h1M682.8 328.5h1M682.8 159.0h1M682.8 332.0h1M682.8 162.4h1M682.8 335.4h1M682.8 165.8h1M682.8 338.8h1M682.8 169.3h1M682.8 342.3h1M682.8 172.7h1M682.8 345.7h1M682.8 176.2h1M682.8 349.2h1M682.8 179.6h1M682.8 352.6h1M682.8 183.0h1M682.8 356.0h1M682.8 186.5h1M682.8 359.5h1M682.8 189.9h1M682.8 362.9h1M682.8 193.4h1M682.8 366.4h1M682.8 196.8h1M682.8 369.8h1M682.8 200.2h1M682.8 373.2h1M682.8 203.7h1M682.8 376.7h1M682.8 207.1h1M682.8 380.1h1M682.8 210.6h1M682.8 383.6h1M730.5 45.4h1M730.5 218.4h1M730.5 48.9h1M730.5 221.9h1M730.5 52.3h1M730.5 225.3h1M730.5 55.8h1M730.5 228.8h1M730.5 59.2h1M730.5 232.2h1M730.5 62.6h1M730.5 235.6h1M730.5 66.1h1M730.5 239.1h1M730.5 69.5h1M730.5 242.5h1M730.5 73.0h1M730.5 246.0h1M730.5 76.4h1M730.5 249.4h1M730.5 79.8h1M730.5 252.8h1M730.5 83.3h1M730.5 256.3h1M730.5 86.7h1M730.5 259.7h1M730.5 90.2h1M730.5 263.2h1M730.5 93.6h1M730.5 266.6h1M730.5 97.0h1M730.5 270.0h1M730.5 100.5h1M730.5 273.5h1M730.5 103.9h1M730.5 276.9h1M730.5 107.4h1M730.5 280.4h1M730.5 110.8h1M730.5 283.8h1M730.5 114.2h1M730.5 287.2h1M730.5 117.7h1M730.5 290.7h1M730.5 121.1h1M730.5 294.1h1M730.5 124.6h1M730.5 297.6h1M730.5 128.0h1M730.5 301.0h1M730.5 131.4h1M730.5 304.4h1M730.5 134.9h1M730.5 307.9h1M730.5 138.3h1M730.5 311.3h1M730.5 141.8h1M730.5 314.8h1M730.5 145.2h1M730.5 318.2h1M730.5 148.6h1M730.5 321.6h1M730.5 152.1h1M730.5 325.1h1M730.5 155.5h1M730.5 328.5h1M730.5 159.0h1M730.5 332.0h1M730.5 162.4h1M730.5 335.4h1M730.5 165.8h1M730.5 338.8h1M730.5 169.3h1M730.5 342.3h1M730.5 172.7h1M730.5 345.7h1M730.5 176.2h1M730.5 349.2h1M730.5 179.6h1M730.5 352.6h1M730.5 183.0h1M730.5 356.0h1M730.5 186.5h1M730.5 359.5h1M730.5 189.9h1M730.5 362.9h1M730.5 193.4h1M730.5 366.4h1M730.5 196.8h1M730.5 369.8h1M730.5 200.2h1M730.5 373.2h1M730.5 203.7h1M730.5 376.7h1M730.5 207.1h1M730.5 380.1h1M730.5 210.6h1M730.5 383.6h1M778.2 45.4h1M778.2 218.4h1M778.2 48.9h1M778.2 221.9h1M778.2 52.3h1M778.2 225.3h1M778.2 55.8h1M778.2 228.8h1M778.2 59.2h1M778.2 232.2h1M778.2 62.6h1M778.2 235.6h1M778.2 66.1h1M778.2 239.1h1M778.2 69.5h1M778.2 242.5h1M778.2 73.0h1M778.2 246.0h1M778.2 76.4h1M778.2 249.4h1M778.2 79.8h1M778.2 252.8h1M778.2 83.3h1M778.2 256.3h1M778.2 86.7h1M778.2 259.7h1M778.2 90.2h1M778.2 263.2h1M778.2 93.6h1M778.2 266.6h1M778.2 97.0h1M778.2 270.0h1M778.2 100.5h1M778.2 273.5h1M778.2 103.9h1M778.2 276.9h1M778.2 107.4h1M778.2 280.4h1M778.2 110.8h1M778.2 283.8h1M778.2 114.2h1M778.2 287.2h1M778.2 117.7h1M778.2 290.7h1M778.2 121.1h1M778.2 294.1h1M778.2 124.6h1M778.2 297.6h1M778.2 128.0h1M778.2 301.0h1M778.2 131.4h1M778.2 304.4h1M778.2 134.9h1M778.2 307.9h1M778.2 138.3h1M778.2 311.3h1M778.2 141.8h1M778.2 314.8h1M778.2 145.2h1M778.2 318.2h1M778.2 148.6h1M778.2 321.6h1M778.2 152.1h1M778.2 325.1h1M778.2 155.5h1M778.2 328.5h1M778.2 159.0h1M778.2 332.0h1M778.2 162.4h1M778.2 335.4h1M778.2 165.8h1M778.2 338.8h1M778.2 169.3h1M778.2 342.3h1M778.2 172.7h1M778.2 345.7h1M778.2 176.2h1M778.2 349.2h1M778.2 179.6h1M778.2 352.6h1M778.2 183.0h1M778.2 356.0h1M778.2 186.5h1M778.2 359.5h1M778.2 189.9h1M778.2 362.9h1M778.2 193.4h1M778.2 366.4h1M778.2 196.8h1M778.2 369.8h1M778.2 200.2h1M778.2 373.2h1M778.2 203.7h1M778.2 376.7h1M778.2 207.1h1M778.2 380.1h1M778.2 210.6h1M778.2 383.6h1M826.0 45.4h1M826.0 218.4h1M826.0 48.9h1M826.0 221.9h1M826.0 52.3h1M826.0 225.3h1M826.0 55.8h1M826.0 228.8h1M826.0 59.2h1M826.0 232.2h1M826.0 62.6h1M826.0 235.6h1M826.0 66.1h1M826.0 239.1h1M826.0 69.5h1M826.0 242.5h1M826.0 73.0h1M826.0 246.0h1M826.0 76.4h1M826.0 249.4h1M826.0 79.8h1M826.0 252.8h1M826.0 83.3h1M826.0 256.3h1M826.0 86.7h1M826.0 259.7h1M826.0 90.2h1M826.0 263.2h1M826.0 93.6h1M826.0 266.6h1M826.0 97.0h1M826.0 270.0h1M826.0 100.5h1M826.0 273.5h1M826.0 103.9h1M826.0 276.9h1M826.0 107.4h1M826.0 280.4h1M826.0 110.8h1M826.0 283.8h1M826.0 114.2h1M826.0 287.2h1M826.0 117.7h1M826.0 290.7h1M826.0 121.1h1M826.0 294.1h1M826.0 124.6h1M826.0 297.6h1M826.0 128.0h1M826.0 301.0h1M826.0 131.4h1M826.0 304.4h1M826.0 134.9h1M826.0 307.9h1M826.0 138.3h1M826.0 311.3h1M826.0 141.8h1M826.0 314.8h1M826.0 145.2h1M826.0 318.2h1M826.0 148.6h1M826.0 321.6h1M826.0 152.1h1M826.0 325.1h1M826.0 155.5h1M826.0 328.5h1M826.0 159.0h1M826.0 332.0h1M826.0 162.4h1M826.0 335.4h1M826.0 165.8h1M826.0 338.8h1M826.0 169.3h1M826.0 342.3h1M826.0 172.7h1M826.0 345.7h1M826.0 176.2h1M826.0 349.2h1M826.0 179.6h1M826.0 352.6h1M826.0 183.0h1M826.0 356.0h1M826.0 186.5h1M826.0 359.5h1M826.0 189.9h1M826.0 362.9h1M826.0 193.4h1M826.0 366.4h1M826.0 196.8h1M826.0 369.8h1M826.0 200.2h1M826.0 373.2h1M826.0 203.7h1M826.0 376.7h1M826.0 207.1h1M826.0 380.1h1M826.0 210.6h1M826.0 383.6h1M873.7 45.4h1M873.7 218.4h1M873.7 48.9h1M873.7 221.9h1M873.7 52.3h1M873.7 225.3h1M873.7 55.8h1M873.7 228.8h1M873.7 59.2h1M873.7 232.2h1M873.7 62.6h1M873.7 235.6h1M873.7 66.1h1M873.7 239.1h1M873.7 69.5h1M873.7 242.5h1M873.7 73.0h1M873.7 246.0h1M873.7 76.4h1M873.7 249.4h1M873.7 79.8h1M873.7 252.8h1M873.7 83.3h1M873.7 256.3h1M873.7 86.7h1M873.7 259.7h1M873.7 90.2h1M873.7 263.2h1M873.7 93.6h1M873.7 266.6h1M873.7 97.0h1M873.7 270.0h1M873.7 100.5h1M873.7 273.5h1M873.7 103.9h1M873.7 276.9h1M873.7 107.4h1M873.7 280.4h1M873.7 110.8h1M873.7 283.8h1M873.7 114.2h1M873.7 287.2h1M873.7 117.7h1M873.7 290.7h1M873.7 121.1h1M873.7 294.1h1M873.7 124.6h1M873.7 297.6h1M873.7 128.0h1M873.7 301.0h1M873.7 131.4h1M873.7 304.4h1M873.7 134.9h1M873.7 307.9h1M873.7 138.3h1M873.7 311.3h1M873.7 141.8h1M873.7 314.8h1M873.7 145.2h1M873.7 318.2h1M873.7 148.6h1M873.7 321.6h1M873.7 152.1h1M873.7 325.1h1M873.7 155.5h1M873.7 328.5h1M873.7 159.0h1M873.7 332.0h1M873.7 162.4h1M873.7 335.4h1M873.7 165.8h1M873.7 338.8h1M873.7 169.3h1M873.7 342.3h1M873.7 172.7h1M873.7 345.7h1M873.7 176.2h1M873.7 349.2h1M873.7 179.6h1M873.7 352.6h1M873.7 183.0h1M873.7 356.0h1M873.7 186.5h1M873.7 359.5h1M873.7 189.9h1M873.7 362.9h1M873.7 193.4h1M873.7 366.4h1M873.7 196.8h1M873.7 369.8h1M873.7 200.2h1M873.7 373.2h1M873.7 203.7h1M873.7 376.7h1M873.7 207.1h1M873.7 380.1h1M873.7 210.6h1M873.7 383.6h1M921.4 45.4h1M921.4 218.4h1M921.4 48.9h1M921.4 221.9h1M921.4 52.3h1M921.4 225.3h1M921.4 55.8h1M921.4 228.8h1M921.4 59.2h1M921.4 232.2h1M921.4 62.6h1M921.4 235.6h1M921.4 66.1h1M921.4 239.1h1M921.4 69.5h1M921.4 242.5h1M921.4 73.0h1M921.4 246.0h1M921.4 76.4h1M921.4 249.4h1M921.4 79.8h1M921.4 252.8h1M921.4 83.3h1M921.4 256.3h1M921.4 86.7h1M921.4 259.7h1M921.4 90.2h1M921.4 263.2h1M921.4 93.6h1M921.4 266.6h1M921.4 97.0h1M921.4 270.0h1M921.4 100.5h1M921.4 273.5h1M921.4 103.9h1M921.4 276.9h1M921.4 107.4h1M921.4 280.4h1M921.4 110.8h1M921.4 283.8h1M921.4 114.2h1M921.4 287.2h1M921.4 117.7h1M921.4 290.7h1M921.4 121.1h1M921.4 294.1h1M921.4 124.6h1M921.4 297.6h1M921.4 128.0h1M921.4 301.0h1M921.4 131.4h1M921.4 304.4h1M921.4 134.9h1M921.4 307.9h1M921.4 138.3h1M921.4 311.3h1M921.4 141.8h1M921.4 314.8h1M921.4 145.2h1M921.4 318.2h1M921.4 148.6h1M921.4 321.6h1M921.4 152.1h1M921.4 325.1h1M921.4 155.5h1M921.4 328.5h1M921.4 159.0h1M921.4 332.0h1M921.4 162.4h1M921.4 335.4h1M921.4 165.8h1M921.4 338.8h1M921.4 169.3h1M921.4 342.3h1M921.4 172.7h1M921.4 345.7h1M921.4 176.2h1M921.4 349.2h1M921.4 179.6h1M921.4 352.6h1M921.4 183.0h1M921.4 356.0h1M921.4 186.5h1M921.4 359.5h1M921.4 189.9h1M921.4 362.9h1M921.4 193.4h1M921.4 366.4h1M921.4 196.8h1M921.4 369.8h1M921.4 200.2h1M921.4 373.2h1M921.4 203.7h1M921.4 376.7h1M921.4 207.1h1M921.4 380.1h1M921.4 210.6h1M921.4 383.6h1M501.5 44.2h1M501.5 228.3h1M511.1 44.2h1M511.1 228.3h1M520.6 44.2h1M520.6 228.3h1M530.2 44.2h1M530.2 228.3h1M539.7 44.2h1M539.7 228.3h1M549.3 44.2h1M549.3 228.3h1M558.8 44.2h1M558.8 228.3h1M568.4 44.2h1M568.4 228.3h1M577.9 44.2h1M577.9 228.3h1M587.5 44.2h1M587.5 228.3h1M597.0 44.2h1M597.0 228.3h1M606.6 44.2h1M606.6 228.3h1M616.1 44.2h1M616.1 228.3h1M625.6 44.2h1M625.6 228.3h1M635.2 44.2h1M635.2 228.3h1M644.7 44.2h1M644.7 228.3h1M654.3 44.2h1M654.3 228.3h1M663.8 44.2h1M663.8 228.3h1M673.4 44.2h1M673.4 228.3h1M682.9 44.2h1M682.9 228.3h1M692.5 44.2h1M692.5 228.3h1M702.0 44.2h1M702.0 228.3h1M711.6 44.2h1M711.6 228.3h1M721.1 44.2h1M721.1 228.3h1M730.6 44.2h1M730.6 228.3h1M740.2 44.2h1M740.2 228.3h1M749.7 44.2h1M749.7 228.3h1M759.3 44.2h1M759.3 228.3h1M768.8 44.2h1M768.8 228.3h1M778.4 44.2h1M778.4 228.3h1M787.9 44.2h1M787.9 228.3h1M797.5 44.2h1M797.5 228.3h1M807.0 44.2h1M807.0 228.3h1M816.6 44.2h1M816.6 228.3h1M826.1 44.2h1M826.1 228.3h1M835.7 44.2h1M835.7 228.3h1M845.2 44.2h1M845.2 228.3h1M854.7 44.2h1M854.7 228.3h1M864.3 44.2h1M864.3 228.3h1M873.8 44.2h1M873.8 228.3h1M883.4 44.2h1M883.4 228.3h1M892.9 44.2h1M892.9 228.3h1M902.5 44.2h1M902.5 228.3h1M912.0 44.2h1M912.0 228.3h1M921.6 44.2h1M921.6 228.3h1M931.1 44.2h1M931.1 228.3h1M940.7 44.2h1M940.7 228.3h1M950.2 44.2h1M950.2 228.3h1M959.8 44.2h1M959.8 228.3h1M501.5 61.4h1M501.5 245.5h1M511.1 61.4h1M511.1 245.5h1M520.6 61.4h1M520.6 245.5h1M530.2 61.4h1M530.2 245.5h1M539.7 61.4h1M539.7 245.5h1M549.3 61.4h1M549.3 245.5h1M558.8 61.4h1M558.8 245.5h1M568.4 61.4h1M568.4 245.5h1M577.9 61.4h1M577.9 245.5h1M587.5 61.4h1M587.5 245.5h1M597.0 61.4h1M597.0 245.5h1M606.6 61.4h1M606.6 245.5h1M616.1 61.4h1M616.1 245.5h1M625.6 61.4h1M625.6 245.5h1M635.2 61.4h1M635.2 245.5h1M644.7 61.4h1M644.7 245.5h1M654.3 61.4h1M654.3 245.5h1M663.8 61.4h1M663.8 245.5h1M673.4 61.4h1M673.4 245.5h1M682.9 61.4h1M682.9 245.5h1M692.5 61.4h1M692.5 245.5h1M702.0 61.4h1M702.0 245.5h1M711.6 61.4h1M711.6 245.5h1M721.1 61.4h1M721.1 245.5h1M730.6 61.4h1M730.6 245.5h1M740.2 61.4h1M740.2 245.5h1M749.7 61.4h1M749.7 245.5h1M759.3 61.4h1M759.3 245.5h1M768.8 61.4h1M768.8 245.5h1M778.4 61.4h1M778.4 245.5h1M787.9 61.4h1M787.9 245.5h1M797.5 61.4h1M797.5 245.5h1M807.0 61.4h1M807.0 245.5h1M816.6 61.4h1M816.6 245.5h1M826.1 61.4h1M826.1 245.5h1M835.7 61.4h1M835.7 245.5h1M845.2 61.4h1M845.2 245.5h1M854.7 61.4h1M854.7 245.5h1M864.3 61.4h1M864.3 245.5h1M873.8 61.4h1M873.8 245.5h1M883.4 61.4h1M883.4 245.5h1M892.9 61.4h1M892.9 245.5h1M902.5 61.4h1M902.5 245.5h1M912.0 61.4h1M912.0 245.5h1M921.6 61.4h1M921.6 245.5h1M931.1 61.4h1M931.1 245.5h1M940.7 61.4h1M940.7 245.5h1M950.2 61.4h1M950.2 245.5h1M959.8 61.4h1M959.8 245.5h1M501.5 78.6h1M501.5 262.7h1M511.1 78.6h1M511.1 262.7h1M520.6 78.6h1M520.6 262.7h1M530.2 78.6h1M530.2 262.7h1M539.7 78.6h1M539.7 262.7h1M549.3 78.6h1M549.3 262.7h1M558.8 78.6h1M558.8 262.7h1M568.4 78.6h1M568.4 262.7h1M577.9 78.6h1M577.9 262.7h1M587.5 78.6h1M587.5 262.7h1M597.0 78.6h1M597.0 262.7h1M606.6 78.6h1M606.6 262.7h1M616.1 78.6h1M616.1 262.7h1M625.6 78.6h1M625.6 262.7h1M635.2 78.6h1M635.2 262.7h1M644.7 78.6h1M644.7 262.7h1M654.3 78.6h1M654.3 262.7h1M663.8 78.6h1M663.8 262.7h1M673.4 78.6h1M673.4 262.7h1M682.9 78.6h1M682.9 262.7h1M692.5 78.6h1M692.5 262.7h1M702.0 78.6h1M702.0 262.7h1M711.6 78.6h1M711.6 262.7h1M721.1 78.6h1M721.1 262.7h1M730.6 78.6h1M730.6 262.7h1M740.2 78.6h1M740.2 262.7h1M749.7 78.6h1M749.7 262.7h1M759.3 78.6h1M759.3 262.7h1M768.8 78.6h1M768.8 262.7h1M778.4 78.6h1M778.4 262.7h1M787.9 78.6h1M787.9 262.7h1M797.5 78.6h1M797.5 262.7h1M807.0 78.6h1M807.0 262.7h1M816.6 78.6h1M816.6 262.7h1M826.1 78.6h1M826.1 262.7h1M835.7 78.6h1M835.7 262.7h1M845.2 78.6h1M845.2 262.7h1M854.7 78.6h1M854.7 262.7h1M864.3 78.6h1M864.3 262.7h1M873.8 78.6h1M873.8 262.7h1M883.4 78.6h1M883.4 262.7h1M892.9 78.6h1M892.9 262.7h1M902.5 78.6h1M902.5 262.7h1M912.0 78.6h1M912.0 262.7h1M921.6 78.6h1M921.6 262.7h1M931.1 78.6h1M931.1 262.7h1M940.7 78.6h1M940.7 262.7h1M950.2 78.6h1M950.2 262.7h1M959.8 78.6h1M959.8 262.7h1M501.5 95.8h1M501.5 279.9h1M511.1 95.8h1M511.1 279.9h1M520.6 95.8h1M520.6 279.9h1M530.2 95.8h1M530.2 279.9h1M539.7 95.8h1M539.7 279.9h1M549.3 95.8h1M549.3 279.9h1M558.8 95.8h1M558.8 279.9h1M568.4 95.8h1M568.4 279.9h1M577.9 95.8h1M577.9 279.9h1M587.5 95.8h1M587.5 279.9h1M597.0 95.8h1M597.0 279.9h1M606.6 95.8h1M606.6 279.9h1M616.1 95.8h1M616.1 279.9h1M625.6 95.8h1M625.6 279.9h1M635.2 95.8h1M635.2 279.9h1M644.7 95.8h1M644.7 279.9h1M654.3 95.8h1M654.3 279.9h1M663.8 95.8h1M663.8 279.9h1M673.4 95.8h1M673.4 279.9h1M682.9 95.8h1M682.9 279.9h1M692.5 95.8h1M692.5 279.9h1M702.0 95.8h1M702.0 279.9h1M711.6 95.8h1M711.6 279.9h1M721.1 95.8h1M721.1 279.9h1M730.6 95.8h1M730.6 279.9h1M740.2 95.8h1M740.2 279.9h1M749.7 95.8h1M749.7 279.9h1M759.3 95.8h1M759.3 279.9h1M768.8 95.8h1M768.8 279.9h1M778.4 95.8h1M778.4 279.9h1M787.9 95.8h1M787.9 279.9h1M797.5 95.8h1M797.5 279.9h1M807.0 95.8h1M807.0 279.9h1M816.6 95.8h1M816.6 279.9h1M826.1 95.8h1M826.1 279.9h1M835.7 95.8h1M835.7 279.9h1M845.2 95.8h1M845.2 279.9h1M854.7 95.8h1M854.7 279.9h1M864.3 95.8h1M864.3 279.9h1M873.8 95.8h1M873.8 279.9h1M883.4 95.8h1M883.4 279.9h1M892.9 95.8h1M892.9 279.9h1M902.5 95.8h1M902.5 279.9h1M912.0 95.8h1M912.0 279.9h1M921.6 95.8h1M921.6 279.9h1M931.1 95.8h1M931.1 279.9h1M940.7 95.8h1M940.7 279.9h1M950.2 95.8h1M950.2 279.9h1M959.8 95.8h1M959.8 279.9h1M501.5 113.0h1M501.5 297.1h1M511.1 113.0h1M511.1 297.1h1M520.6 113.0h1M520.6 297.1h1M530.2 113.0h1M530.2 297.1h1M539.7 113.0h1M539.7 297.1h1M549.3 113.0h1M549.3 297.1h1M558.8 113.0h1M558.8 297.1h1M568.4 113.0h1M568.4 297.1h1M577.9 113.0h1M577.9 297.1h1M587.5 113.0h1M587.5 297.1h1M597.0 113.0h1M597.0 297.1h1M606.6 113.0h1M606.6 297.1h1M616.1 113.0h1M616.1 297.1h1M625.6 113.0h1M625.6 297.1h1M635.2 113.0h1M635.2 297.1h1M644.7 113.0h1M644.7 297.1h1M654.3 113.0h1M654.3 297.1h1M663.8 113.0h1M663.8 297.1h1M673.4 113.0h1M673.4 297.1h1M682.9 113.0h1M682.9 297.1h1M692.5 113.0h1M692.5 297.1h1M702.0 113.0h1M702.0 297.1h1M711.6 113.0h1M711.6 297.1h1M721.1 113.0h1M721.1 297.1h1M730.6 113.0h1M730.6 297.1h1M740.2 113.0h1M740.2 297.1h1M749.7 113.0h1M749.7 297.1h1M759.3 113.0h1M759.3 297.1h1M768.8 113.0h1M768.8 297.1h1M778.4 113.0h1M778.4 297.1h1M787.9 113.0h1M787.9 297.1h1M797.5 113.0h1M797.5 297.1h1M807.0 113.0h1M807.0 297.1h1M816.6 113.0h1M816.6 297.1h1M826.1 113.0h1M826.1 297.1h1M835.7 113.0h1M835.7 297.1h1M845.2 113.0h1M845.2 297.1h1M854.7 113.0h1M854.7 297.1h1M864.3 113.0h1M864.3 297.1h1M873.8 113.0h1M873.8 297.1h1M883.4 113.0h1M883.4 297.1h1M892.9 113.0h1M892.9 297.1h1M902.5 113.0h1M902.5 297.1h1M912.0 113.0h1M912.0 297.1h1M921.6 113.0h1M921.6 297.1h1M931.1 113.0h1M931.1 297.1h1M940.7 113.0h1M940.7 297.1h1M950.2 113.0h1M950.2 297.1h1M959.8 113.0h1M959.8 297.1h1M501.5 130.2h1M501.5 314.3h1M511.1 130.2h1M511.1 314.3h1M520.6 130.2h1M520.6 314.3h1M530.2 130.2h1M530.2 314.3h1M539.7 130.2h1M539.7 314.3h1M549.3 130.2h1M549.3 314.3h1M558.8 130.2h1M558.8 314.3h1M568.4 130.2h1M568.4 314.3h1M577.9 130.2h1M577.9 314.3h1M587.5 130.2h1M587.5 314.3h1M597.0 130.2h1M597.0 314.3h1M606.6 130.2h1M606.6 314.3h1M616.1 130.2h1M616.1 314.3h1M625.6 130.2h1M625.6 314.3h1M635.2 130.2h1M635.2 314.3h1M644.7 130.2h1M644.7 314.3h1M654.3 130.2h1M654.3 314.3h1M663.8 130.2h1M663.8 314.3h1M673.4 130.2h1M673.4 314.3h1M682.9 130.2h1M682.9 314.3h1M692.5 130.2h1M692.5 314.3h1M702.0 130.2h1M702.0 314.3h1M711.6 130.2h1M711.6 314.3h1M721.1 130.2h1M721.1 314.3h1M730.6 130.2h1M730.6 314.3h1M740.2 130.2h1M740.2 314.3h1M749.7 130.2h1M749.7 314.3h1M759.3 130.2h1M759.3 314.3h1M768.8 130.2h1M768.8 314.3h1M778.4 130.2h1M778.4 314.3h1M787.9 130.2h1M787.9 314.3h1M797.5 130.2h1M797.5 314.3h1M807.0 130.2h1M807.0 314.3h1M816.6 130.2h1M816.6 314.3h1M826.1 130.2h1M826.1 314.3h1M835.7 130.2h1M835.7 314.3h1M845.2 130.2h1M845.2 314.3h1M854.7 130.2h1M854.7 314.3h1M864.3 130.2h1M864.3 314.3h1M873.8 130.2h1M873.8 314.3h1M883.4 130.2h1M883.4 314.3h1M892.9 130.2h1M892.9 314.3h1M902.5 130.2h1M902.5 314.3h1M912.0 130.2h1M912.0 314.3h1M921.6 130.2h1M921.6 314.3h1M931.1 130.2h1M931.1 314.3h1M940.7 130.2h1M940.7 314.3h1M950.2 130.2h1M950.2 314.3h1M959.8 130.2h1M959.8 314.3h1M501.5 147.4h1M501.5 331.5h1M511.1 147.4h1M511.1 331.5h1M520.6 147.4h1M520.6 331.5h1M530.2 147.4h1M530.2 331.5h1M539.7 147.4h1M539.7 331.5h1M549.3 147.4h1M549.3 331.5h1M558.8 147.4h1M558.8 331.5h1M568.4 147.4h1M568.4 331.5h1M577.9 147.4h1M577.9 331.5h1M587.5 147.4h1M587.5 331.5h1M597.0 147.4h1M597.0 331.5h1M606.6 147.4h1M606.6 331.5h1M616.1 147.4h1M616.1 331.5h1M625.6 147.4h1M625.6 331.5h1M635.2 147.4h1M635.2 331.5h1M644.7 147.4h1M644.7 331.5h1M654.3 147.4h1M654.3 331.5h1M663.8 147.4h1M663.8 331.5h1M673.4 147.4h1M673.4 331.5h1M682.9 147.4h1M682.9 331.5h1M692.5 147.4h1M692.5 331.5h1M702.0 147.4h1M702.0 331.5h1M711.6 147.4h1M711.6 331.5h1M721.1 147.4h1M721.1 331.5h1M730.6 147.4h1M730.6 331.5h1M740.2 147.4h1M740.2 331.5h1M749.7 147.4h1M749.7 331.5h1M759.3 147.4h1M759.3 331.5h1M768.8 147.4h1M768.8 331.5h1M778.4 147.4h1M778.4 331.5h1M787.9 147.4h1M787.9 331.5h1M797.5 147.4h1M797.5 331.5h1M807.0 147.4h1M807.0 331.5h1M816.6 147.4h1M816.6 331.5h1M826.1 147.4h1M826.1 331.5h1M835.7 147.4h1M835.7 331.5h1M845.2 147.4h1M845.2 331.5h1M854.7 147.4h1M854.7 331.5h1M864.3 147.4h1M864.3 331.5h1M873.8 147.4h1M873.8 331.5h1M883.4 147.4h1M883.4 331.5h1M892.9 147.4h1M892.9 331.5h1M902.5 147.4h1M902.5 331.5h1M912.0 147.4h1M912.0 331.5h1M921.6 147.4h1M921.6 331.5h1M931.1 147.4h1M931.1 331.5h1M940.7 147.4h1M940.7 331.5h1M950.2 147.4h1M950.2 331.5h1M959.8 147.4h1M959.8 331.5h1M501.5 164.6h1M501.5 348.7h1M511.1 164.6h1M511.1 348.7h1M520.6 164.6h1M520.6 348.7h1M530.2 164.6h1M530.2 348.7h1M539.7 164.6h1M539.7 348.7h1M549.3 164.6h1M549.3 348.7h1M558.8 164.6h1M558.8 348.7h1M568.4 164.6h1M568.4 348.7h1M577.9 164.6h1M577.9 348.7h1M587.5 164.6h1M587.5 348.7h1M597.0 164.6h1M597.0 348.7h1M606.6 164.6h1M606.6 348.7h1M616.1 164.6h1M616.1 348.7h1M625.6 164.6h1M625.6 348.7h1M635.2 164.6h1M635.2 348.7h1M644.7 164.6h1M644.7 348.7h1M654.3 164.6h1M654.3 348.7h1M663.8 164.6h1M663.8 348.7h1M673.4 164.6h1M673.4 348.7h1M682.9 164.6h1M682.9 348.7h1M692.5 164.6h1M692.5 348.7h1M702.0 164.6h1M702.0 348.7h1M711.6 164.6h1M711.6 348.7h1M721.1 164.6h1M721.1 348.7h1M730.6 164.6h1M730.6 348.7h1M740.2 164.6h1M740.2 348.7h1M749.7 164.6h1M749.7 348.7h1M759.3 164.6h1M759.3 348.7h1M768.8 164.6h1M768.8 348.7h1M778.4 164.6h1M778.4 348.7h1M787.9 164.6h1M787.9 348.7h1M797.5 164.6h1M797.5 348.7h1M807.0 164.6h1M807.0 348.7h1M816.6 164.6h1M816.6 348.7h1M826.1 164.6h1M826.1 348.7h1M835.7 164.6h1M835.7 348.7h1M845.2 164.6h1M845.2 348.7h1M854.7 164.6h1M854.7 348.7h1M864.3 164.6h1M864.3 348.7h1M873.8 164.6h1M873.8 348.7h1M883.4 164.6h1M883.4 348.7h1M892.9 164.6h1M892.9 348.7h1M902.5 164.6h1M902.5 348.7h1M912.0 164.6h1M912.0 348.7h1M921.6 164.6h1M921.6 348.7h1M931.1 164.6h1M931.1 348.7h1M940.7 164.6h1M940.7 348.7h1M950.2 164.6h1M950.2 348.7h1M959.8 164.6h1M959.8 348.7h1M501.5 181.8h1M501.5 365.9h1M511.1 181.8h1M511.1 365.9h1M520.6 181.8h1M520.6 365.9h1M530.2 181.8h1M530.2 365.9h1M539.7 181.8h1M539.7 365.9h1M549.3 181.8h1M549.3 365.9h1M558.8 181.8h1M558.8 365.9h1M568.4 181.8h1M568.4 365.9h1M577.9 181.8h1M577.9 365.9h1M587.5 181.8h1M587.5 365.9h1M597.0 181.8h1M597.0 365.9h1M606.6 181.8h1M606.6 365.9h1M616.1 181.8h1M616.1 365.9h1M625.6 181.8h1M625.6 365.9h1M635.2 181.8h1M635.2 365.9h1M644.7 181.8h1M644.7 365.9h1M654.3 181.8h1M654.3 365.9h1M663.8 181.8h1M663.8 365.9h1M673.4 181.8h1M673.4 365.9h1M682.9 181.8h1M682.9 365.9h1M692.5 181.8h1M692.5 365.9h1M702.0 181.8h1M702.0 365.9h1M711.6 181.8h1M711.6 365.9h1M721.1 181.8h1M721.1 365.9h1M730.6 181.8h1M730.6 365.9h1M740.2 181.8h1M740.2 365.9h1M749.7 181.8h1M749.7 365.9h1M759.3 181.8h1M759.3 365.9h1M768.8 181.8h1M768.8 365.9h1M778.4 181.8h1M778.4 365.9h1M787.9 181.8h1M787.9 365.9h1M797.5 181.8h1M797.5 365.9h1M807.0 181.8h1M807.0 365.9h1M816.6 181.8h1M816.6 365.9h1M826.1 181.8h1M826.1 365.9h1M835.7 181.8h1M835.7 365.9h1M845.2 181.8h1M845.2 365.9h1M854.7 181.8h1M854.7 365.9h1M864.3 181.8h1M864.3 365.9h1M873.8 181.8h1M873.8 365.9h1M883.4 181.8h1M883.4 365.9h1M892.9 181.8h1M892.9 365.9h1M902.5 181.8h1M902.5 365.9h1M912.0 181.8h1M912.0 365.9h1M921.6 181.8h1M921.6 365.9h1M931.1 181.8h1M931.1 365.9h1M940.7 181.8h1M940.7 365.9h1M950.2 181.8h1M950.2 365.9h1M959.8 181.8h1M959.8 365.9h1M501.5 199.0h1M501.5 383.1h1M511.1 199.0h1M511.1 383.1h1M520.6 199.0h1M520.6 383.1h1M530.2 199.0h1M530.2 383.1h1M539.7 199.0h1M539.7 383.1h1M549.3 199.0h1M549.3 383.1h1M558.8 199.0h1M558.8 383.1h1M568.4 199.0h1M568.4 383.1h1M577.9 199.0h1M577.9 383.1h1M587.5 199.0h1M587.5 383.1h1M597.0 199.0h1M597.0 383.1h1M606.6 199.0h1M606.6 383.1h1M616.1 199.0h1M616.1 383.1h1M625.6 199.0h1M625.6 383.1h1M635.2 199.0h1M635.2 383.1h1M644.7 199.0h1M644.7 383.1h1M654.3 199.0h1M654.3 383.1h1M663.8 199.0h1M663.8 383.1h1M673.4 199.0h1M673.4 383.1h1M682.9 199.0h1M682.9 383.1h1M692.5 199.0h1M692.5 383.1h1M702.0 199.0h1M702.0 383.1h1M711.6 199.0h1M711.6 383.1h1M721.1 199.0h1M721.1 383.1h1M730.6 199.0h1M730.6 383.1h1M740.2 199.0h1M740.2 383.1h1M749.7 199.0h1M749.7 383.1h1M759.3 199.0h1M759.3 383.1h1M768.8 199.0h1M768.8 383.1h1M778.4 199.0h1M778.4 383.1h1M787.9 199.0h1M787.9 383.1h1M797.5 199.0h1M797.5 383.1h1M807.0 199.0h1M807.0 383.1h1M816.6 199.0h1M816.6 383.1h1M826.1 199.0h1M826.1 383.1h1M835.7 199.0h1M835.7 383.1h1M845.2 199.0h1M845.2 383.1h1M854.7 199.0h1M854.7 383.1h1M864.3 199.0h1M864.3 383.1h1M873.8 199.0h1M873.8 383.1h1M883.4 199.0h1M883.4 383.1h1M892.9 199.0h1M892.9 383.1h1M902.5 199.0h1M902.5 383.1h1M912.0 199.0h1M912.0 383.1h1M921.6 199.0h1M921.6 383.1h1M931.1 199.0h1M931.1 383.1h1M940.7 199.0h1M940.7 383.1h1M950.2 199.0h1M950.2 383.1h1M959.8 199.0h1M959.8 383.1h1" stroke="#444" stroke-width="1" fill="none"/>
<path d="M731.8 42V213M731.8 215V385" stroke="#b8b8b8" stroke-width="1" stroke-dasharray="2.5 2.5"/>
<path d="M493 147.4H968M493 296.6H968" stroke="#a0a0a0" stroke-width="1" stroke-dasharray="4 3"/>
<path d="M492 213.7H969" stroke="#787878" stroke-width="1.5"/>
<text x="539.6" y="211" font-size="7.8" fill="#9c9c9c" text-anchor="middle">-32 μs</text>
<text x="587.3" y="211" font-size="7.8" fill="#9c9c9c" text-anchor="middle">-24 μs</text>
<text x="635.1" y="211" font-size="7.8" fill="#9c9c9c" text-anchor="middle">-16 μs</text>
<text x="682.8" y="211" font-size="7.8" fill="#9c9c9c" text-anchor="middle">-8 μs</text>
<text x="730.5" y="211" font-size="7.8" fill="#9c9c9c" text-anchor="middle">0 s</text>
<text x="778.2" y="211" font-size="7.8" fill="#9c9c9c" text-anchor="middle">8 μs</text>
<text x="826.0" y="211" font-size="7.8" fill="#9c9c9c" text-anchor="middle">16 μs</text>
<text x="873.7" y="211" font-size="7.8" fill="#9c9c9c" text-anchor="middle">24 μs</text>
<text x="921.4" y="211" font-size="7.8" fill="#9c9c9c" text-anchor="middle">32 μs</text>
<clipPath id="cu"><rect x="492" y="42" width="477" height="171"/></clipPath>
<clipPath id="cl"><rect x="492" y="214.5" width="477" height="170.5"/></clipPath>
<g clip-path="url(#cu)"><polyline points="493.0,108.0 494.0,181.0 495.0,180.2 496.0,182.3 497.0,181.1 498.0,182.7 499.0,182.9 500.0,179.0 501.0,178.7 502.0,184.3 503.0,180.4 504.0,180.2 505.0,185.4 506.0,181.8 507.0,184.3 508.0,181.8 509.0,182.9 509.6,181.0 509.9,84.0 510.5,81.0 511.2,82.5 511.9,79.5 512.6,82.0 513.4,80.5 514.2,82.5 515.1,81.5 516.2,83.0 517.2,84.5 518.4,89.0 519.8,98.0 520.9,110.0 521.8,132.0 522.5,158.0 523.1,181.0 524.1,179.6 525.1,182.9 526.1,184.5 527.1,182.2 528.1,183.6 529.1,183.2 530.1,179.0 531.1,183.8 532.1,182.6 533.1,180.6 534.1,178.8 535.1,184.5 536.1,181.8 537.1,183.5 536.9,182.0 537.2,181.0 537.5,84.0 538.1,81.0 538.8,82.5 539.5,79.5 540.2,82.0 541.0,80.5 541.8,82.5 542.7,81.5 543.8,83.0 544.8,84.5 546.0,89.0 547.4,98.0 548.5,110.0 549.4,132.0 550.1,158.0 550.7,181.0 551.7,184.6 552.7,183.5 553.7,184.9 554.7,181.3 555.7,184.0 556.7,181.6 557.7,185.0 558.7,184.6 559.7,179.3 560.7,179.5 561.7,180.1 562.7,185.2 563.7,181.6 564.7,182.9 564.5,182.0 564.8,181.0 565.1,84.0 565.7,81.0 566.4,82.5 567.1,79.5 567.8,82.0 568.6,80.5 569.4,82.5 570.3,81.5 571.4,83.0 572.4,84.5 573.6,89.0 575.0,98.0 576.1,110.0 577.0,132.0 577.7,158.0 578.3,181.0 579.3,180.6 580.3,182.0 581.3,181.2 582.3,181.0 583.3,182.6 584.3,182.6 585.3,184.7 586.3,183.2 587.3,184.9 588.3,184.4 589.3,185.3 590.3,183.2 591.3,179.7 592.3,184.5 592.1,182.0 592.4,181.0 592.7,84.0 593.3,81.0 594.0,82.5 594.7,79.5 595.4,82.0 596.2,80.5 597.0,82.5 597.9,81.5 599.0,83.0 600.0,84.5 601.2,89.0 602.6,98.0 603.7,110.0 604.6,132.0 605.3,158.0 605.9,181.0 606.9,185.2 607.9,184.8 608.9,182.5 609.9,183.5 610.9,180.0 611.9,184.3 612.9,182.5 613.9,180.5 614.9,179.0 615.9,184.4 616.9,185.3 617.9,179.2 618.9,184.0 619.9,181.4 619.7,182.0 620.0,181.0 620.3,84.0 620.9,81.0 621.6,82.5 622.3,79.5 623.0,82.0 623.8,80.5 624.6,82.5 625.5,81.5 626.6,83.0 627.6,84.5 628.8,89.0 630.2,98.0 631.3,110.0 632.2,132.0 632.9,158.0 633.5,181.0 634.5,179.6 635.5,180.6 636.5,183.8 637.5,184.5 638.5,178.9 639.5,182.8 640.5,178.9 641.5,183.5 642.5,180.9 643.5,184.6 644.5,185.3 645.5,182.0 646.5,185.4 647.5,180.7 647.3,182.0 647.6,181.0 647.9,84.0 648.5,81.0 649.2,82.5 649.9,79.5 650.6,82.0 651.4,80.5 652.2,82.5 653.1,81.5 654.2,83.0 655.2,84.5 656.4,89.0 657.8,98.0 658.9,110.0 659.8,132.0 660.5,158.0 661.1,181.0 662.1,179.1 663.1,182.7 664.1,178.8 665.1,179.9 666.1,181.4 667.1,182.8 668.1,179.7 669.1,178.9 670.1,184.5 671.1,180.7 672.1,185.1 673.1,184.7 674.1,181.2 675.1,181.7 674.9,182.0 675.2,181.0 675.5,84.0 676.1,81.0 676.8,82.5 677.5,79.5 678.2,82.0 679.0,80.5 679.8,82.5 680.7,81.5 681.8,83.0 682.8,84.5 684.0,89.0 685.4,98.0 686.5,110.0 687.4,132.0 688.1,158.0 688.7,181.0 689.7,182.1 690.7,183.0 691.7,182.7 692.7,182.4 693.7,182.8 694.7,185.0 695.7,182.0 696.7,181.5 697.7,183.5 698.7,180.2 699.7,180.6 700.7,185.2 701.7,182.1 702.7,182.3 702.5,182.0 702.8,181.0 703.1,84.0 703.7,81.0 704.4,82.5 705.1,79.5 705.8,82.0 706.6,80.5 707.4,82.5 708.3,81.5 709.4,83.0 710.4,84.5 711.6,89.0 713.0,98.0 714.1,110.0 715.0,132.0 715.7,158.0 716.3,181.0 717.3,178.7 718.3,181.4 719.3,182.5 720.3,178.7 721.3,182.8 722.3,182.9 723.3,179.0 724.3,182.9 725.3,181.8 726.3,183.2 727.3,181.0 728.3,183.4 729.3,183.6 730.3,178.8 730.1,182.0 730.4,181.0 730.7,84.0 731.3,81.0 732.0,82.5 732.7,79.5 733.4,82.0 734.2,80.5 735.0,82.5 735.9,81.5 737.0,83.0 738.0,84.5 739.2,89.0 740.6,98.0 741.7,110.0 742.6,132.0 743.3,158.0 743.9,181.0 744.9,179.0 745.9,183.2 746.9,185.2 747.9,180.3 748.9,181.7 749.9,182.6 750.9,180.8 751.9,181.1 752.9,180.7 753.9,181.1 754.9,182.7 755.9,180.6 756.9,181.2 757.9,183.9 757.7,182.0 758.0,181.0 758.3,84.0 758.9,81.0 759.6,82.5 760.3,79.5 761.0,82.0 761.8,80.5 762.6,82.5 763.5,81.5 764.6,83.0 765.6,84.5 766.8,89.0 768.2,98.0 769.3,110.0 770.2,132.0 770.9,158.0 771.5,181.0 772.5,178.8 773.5,182.5 774.5,183.6 775.5,180.7 776.5,180.1 777.5,184.1 778.5,180.2 779.5,179.9 780.5,181.6 781.5,183.3 782.5,179.3 783.5,180.8 784.5,180.9 785.5,184.3 785.3,182.0 785.6,181.0 785.9,84.0 786.5,81.0 787.2,82.5 787.9,79.5 788.6,82.0 789.4,80.5 790.2,82.5 791.1,81.5 792.2,83.0 793.2,84.5 794.4,89.0 795.8,98.0 796.9,110.0 797.8,132.0 798.5,158.0 799.1,181.0 800.1,181.6 801.1,184.4 802.1,179.8 803.1,180.9 804.1,183.0 805.1,184.6 806.1,181.7 807.1,180.1 808.1,179.4 809.1,182.2 810.1,179.9 811.1,184.1 812.1,184.3 813.1,179.8 812.9,182.0 813.2,181.0 813.5,84.0 814.1,81.0 814.8,82.5 815.5,79.5 816.2,82.0 817.0,80.5 817.8,82.5 818.7,81.5 819.8,83.0 820.8,84.5 822.0,89.0 823.4,98.0 824.5,110.0 825.4,132.0 826.1,158.0 826.7,181.0 827.7,180.5 828.7,184.1 829.7,183.0 830.7,184.1 831.7,180.9 832.7,179.5 833.7,180.6 834.7,184.0 835.7,180.4 836.7,181.0 837.7,181.4 838.7,181.5 839.7,181.4 840.7,184.9 840.5,182.0 840.8,181.0 841.1,84.0 841.7,81.0 842.4,82.5 843.1,79.5 843.8,82.0 844.6,80.5 845.4,82.5 846.3,81.5 847.4,83.0 848.4,84.5 849.6,89.0 851.0,98.0 852.1,110.0 853.0,132.0 853.7,158.0 854.3,181.0 855.3,179.7 856.3,178.6 857.3,185.0 858.3,184.6 859.3,185.3 860.3,181.6 861.3,185.1 862.3,184.9 863.3,180.1 864.3,183.7 865.3,184.3 866.3,183.1 867.3,182.1 868.3,180.6 868.1,182.0 868.4,181.0 868.7,84.0 869.3,81.0 870.0,82.5 870.7,79.5 871.4,82.0 872.2,80.5 873.0,82.5 873.9,81.5 875.0,83.0 876.0,84.5 877.2,89.0 878.6,98.0 879.7,110.0 880.6,132.0 881.3,158.0 881.9,181.0 882.9,180.9 883.9,180.1 884.9,179.1 885.9,182.6 886.9,180.6 887.9,184.1 888.9,178.9 889.9,184.7 890.9,183.3 891.9,184.9 892.9,184.7 893.9,184.7 894.9,182.5 895.9,178.7 895.7,182.0 896.0,181.0 896.3,84.0 896.9,81.0 897.6,82.5 898.3,79.5 899.0,82.0 899.8,80.5 900.6,82.5 901.5,81.5 902.6,83.0 903.6,84.5 904.8,89.0 906.2,98.0 907.3,110.0 908.2,132.0 908.9,158.0 909.5,181.0 910.5,183.7 911.5,179.8 912.5,180.6 913.5,183.1 914.5,182.2 915.5,181.4 916.5,185.0 917.5,182.8 918.5,180.9 919.5,180.3 920.5,184.5 921.5,181.8 922.5,183.9 923.5,181.0 923.3,182.0 923.6,181.0 923.9,84.0 924.5,81.0 925.2,82.5 925.9,79.5 926.6,82.0 927.4,80.5 928.2,82.5 929.1,81.5 930.2,83.0 931.2,84.5 932.4,89.0 933.8,98.0 934.9,110.0 935.8,132.0 936.5,158.0 937.1,181.0 938.1,179.9 939.1,182.2 940.1,184.2 941.1,179.8 942.1,184.0 943.1,184.9 944.1,184.1 945.1,184.2 946.1,178.7 947.1,182.9 948.1,184.5 949.1,178.9 950.1,180.4 951.1,180.4 950.9,182.0 951.2,181.0 951.5,84.0 952.1,81.0 952.8,82.5 953.5,79.5 954.2,82.0 955.0,80.5 955.8,82.5 956.7,81.5 957.8,83.0 958.8,84.5 960.0,89.0 961.4,98.0 962.5,110.0 963.4,132.0 964.1,158.0 964.7,181.0 965.7,182.2 966.7,181.5 967.7,181.8 968.7,183.9 969.7,178.6 970.7,179.0 971.7,179.5 972.7,179.4 973.7,179.1 974.7,185.2 975.7,184.4 976.7,179.2 977.7,182.0 978.7,180.7 978.5,182.0" stroke="#cdb918" stroke-width="1.35" fill="none" stroke-linejoin="round"/>
<path d="M955 180V84l3 -2l3 2l2 8l2 30l2 60" stroke="#c8b818" stroke-width="1.1" fill="none"/></g>
<g clip-path="url(#cl)"><polyline points="488.0,300.0 494.2,244.2 508.4,350.9 521.9,245.5 536.1,352.0 549.6,245.0 563.8,351.3 577.2,245.2 591.4,351.5 604.9,246.2 619.1,353.7 632.6,245.9 646.8,352.3 660.3,245.6 674.5,353.6 688.0,247.2 702.2,355.3 715.6,246.8 729.8,355.8 743.3,247.9 757.5,355.1 771.0,247.4 785.2,355.8 798.7,248.7 812.9,356.0 826.4,249.0 840.6,356.6 854.0,247.9 868.2,357.3 881.7,249.6 895.9,356.3 909.4,249.1 923.6,357.8 937.1,250.7 951.3,359.8 964.8,249.5 979.0,360.1 992.4,251.1 1006.6,358.7 1020.1,250.4 1034.3,358.7" stroke="#1f9ca8" stroke-width="1.2" fill="none" stroke-linejoin="round"/>
<path d="M950 352L958 275L964 245L970 300" stroke="#2296a2" stroke-width="1" fill="none"/></g>
<rect x="620.5" y="57.5" width="175.5" height="20.5" rx="2" fill="#3e3e3e" fill-opacity="0.85"/>
<rect x="626" y="81.5" width="75" height="21.5" rx="2" fill="#3e3e3e" fill-opacity="0.85"/>
<rect x="714" y="81.5" width="76.5" height="21.5" rx="2" fill="#3e3e3e" fill-opacity="0.85"/>
<path d="M702.8 42V213M702.8 215V385M714 42V213M714 215V385" stroke="#8c8c8c" stroke-width="1.3"/>
<circle cx="702.8" cy="188" r="2.5" stroke="#b0b0b0" stroke-width="0.9" fill="none"/><path d="M698 183l10 10M708 183l-10 10" stroke="#b0b0b0" stroke-width="0.8"/>
<circle cx="714" cy="105" r="2.5" stroke="#b0b0b0" stroke-width="0.9" fill="none"/><path d="M709 100l10 10M719 100l-10 10" stroke="#b0b0b0" stroke-width="0.8"/>
<path d="M703.5 93.3h8.5" stroke="#d02020" stroke-width="1"/>
<path d="M493.5 121.3h15.5l4 6l-4 6h-15.5z" fill="#f4ec30"/><text x="502.5" y="130.3" font-size="7" fill="#4a4010" text-anchor="middle" letter-spacing="1.2">C1</text>
<path d="M493.5 293.5h14l5.5 6.3l-5.5 6.2h-14z" fill="#062a2e" stroke="#1c9098" stroke-width="1.1"/><text x="503" y="302.3" font-size="7" fill="#30b8c4" text-anchor="middle" letter-spacing="1.2">C2</text>
<text x="966" y="64.2" font-size="8" fill="#d8c820" text-anchor="end">11 V</text>
<text x="966" y="81.4" font-size="8" fill="#d8c820" text-anchor="end">8.8 V</text>
<text x="966" y="98.6" font-size="8" fill="#d8c820" text-anchor="end">6.6 V</text>
<text x="966" y="115.8" font-size="8" fill="#d8c820" text-anchor="end">4.4 V</text>
<text x="966" y="133.0" font-size="8" fill="#d8c820" text-anchor="end">2.2 V</text>
<text x="966" y="150.2" font-size="8" fill="#d8c820" text-anchor="end">0 V</text>
<text x="966" y="167.4" font-size="8" fill="#d8c820" text-anchor="end">-2.2 V</text>
<text x="966" y="184.6" font-size="8" fill="#d8c820" text-anchor="end">-4.4 V</text>
<text x="966" y="201.8" font-size="8" fill="#d8c820" text-anchor="end">-6.6 V</text>
<text x="966" y="231.1" font-size="8" fill="#2aa8b4" text-anchor="end">132 mA</text>
<text x="966" y="248.3" font-size="8" fill="#2aa8b4" text-anchor="end">99 mA</text>
<text x="966" y="265.5" font-size="8" fill="#2aa8b4" text-anchor="end">66 mA</text>
<text x="966" y="282.7" font-size="8" fill="#2aa8b4" text-anchor="end">33 mA</text>
<text x="966" y="299.9" font-size="8" fill="#2aa8b4" text-anchor="end">0 A</text>
<text x="966" y="317.1" font-size="8" fill="#2aa8b4" text-anchor="end">-33 mA</text>
<text x="966" y="334.3" font-size="8" fill="#2aa8b4" text-anchor="end">-66 mA</text>
<text x="966" y="351.5" font-size="8" fill="#2aa8b4" text-anchor="end">-99 mA</text>
<text x="966" y="368.7" font-size="8" fill="#2aa8b4" text-anchor="end">-132 mA</text>
<path d="M957.5 128l6.5 -5.5v11z" fill="#f0e020"/><path d="M963 128h6" stroke="#f0e020" stroke-width="1.5"/>
<path d="M947 45.5H966V61z" fill="#5c5c5c"/><circle cx="962" cy="48.8" r="2.6" stroke="#bdbdbd" stroke-width="1.1" fill="none"/><path d="M960.2 50.8l-4 4" stroke="#bdbdbd" stroke-width="1.3"/>
<rect x="685" y="44.5" width="13" height="10" rx="1.5" fill="#e8d830"/><text x="691.5" y="52.3" font-size="7.5" fill="#333" text-anchor="middle" font-weight="bold">C1</text>
<circle cx="702.8" cy="49.5" r="5.2" fill="#3a90d8"/><text x="702.8" y="52.2" font-size="7" fill="#cfe4f8" text-anchor="middle">B</text>
<rect x="708" y="44.5" width="13" height="10" rx="1.5" fill="#e8d830"/><text x="714.5" y="52.3" font-size="7.5" fill="#333" text-anchor="middle" font-weight="bold">C1</text>
<rect x="724" y="44.5" width="10" height="10" rx="2" fill="#3a3a3a" stroke="#c08020" stroke-width="0.8"/><path d="M731 52v4h-4" stroke="#d07018" stroke-width="1" fill="none"/>
<text x="623" y="66.5" font-size="8.2" fill="#dedede">Δt: 1.892 μs</text>
<text x="682" y="66.5" font-size="8.2" fill="#dedede">1/Δt: 528.52 kHz</text>
<text x="623" y="76" font-size="8.2" fill="#dedede">Δv: 10.528 V</text>
<text x="682" y="76" font-size="8.2" fill="#dedede">Δv/Δt: 5.56 MV/s</text>
<text x="628" y="90.5" font-size="8.2" fill="#dedede">t: -4.712 μs</text>
<text x="628" y="100" font-size="8.2" fill="#dedede">v: -5.254 V</text>
<text x="716" y="90.5" font-size="8.2" fill="#dedede">t: -2.820 μs</text>
<text x="716" y="100" font-size="8.2" fill="#dedede">v: 5.274 V</text>
</svg>
<div style="left:979px;top:27.5px;width:82.6px;height:494px;background:#403c38;"></div>
<div style="left:980.3px;top:28.5px;width:80.4px;height:492px;background:#2b2b2b;"></div>
<div style="left:1059.6px;top:27.5px;width:2px;height:494px;background:#3a3a3a;"></div>
<span class="t" style="left:1020.5px;top:28.22px;font-size:8.8px;color:#e6e6e6;transform:translateX(-50%);-webkit-text-stroke:0.3px #e6e6e6;">Add New...</span>
<div style="left:983.6px;top:41.5px;width:34.299999999999955px;height:18.700000000000003px;border:1px solid #4e4842;border-radius:3px;background:#2d2d2d;"></div>
<span class="t" style="left:1000.75px;top:45.81px;font-size:8.9px;color:#e0e0e0;transform:translateX(-50%);">Cursors</span>
<div style="left:1023.2px;top:41.5px;width:35.299999999999955px;height:18.700000000000003px;border:1px solid #4e4842;border-radius:3px;background:#2d2d2d;"></div>
<span class="t" style="left:1040.85px;top:45.81px;font-size:8.9px;color:#e0e0e0;transform:translateX(-50%);">Note</span>
<div style="left:983.6px;top:65.8px;width:34.299999999999955px;height:18.700000000000003px;border:1px solid #4e4842;border-radius:3px;background:#2d2d2d;"></div>
<span class="t" style="left:1000.75px;top:70.11px;font-size:8.9px;color:#e0e0e0;transform:translateX(-50%);">Measure</span>
<div style="left:1023.2px;top:65.8px;width:35.299999999999955px;height:18.700000000000003px;border:1px solid #4e4842;border-radius:3px;background:#2d2d2d;"></div>
<span class="t" style="left:1040.85px;top:70.11px;font-size:8.9px;color:#e0e0e0;transform:translateX(-50%);">Search</span>
<div style="left:983.6px;top:89.7px;width:34.299999999999955px;height:18.700000000000003px;border:1px solid #4e4842;border-radius:3px;background:#2d2d2d;"></div>
<span class="t" style="left:1000.75px;top:89.78px;font-size:8.277000000000001px;color:#e0e0e0;transform:translateX(-50%);">Results</span>
<span class="t" style="left:1000.75px;top:98.78px;font-size:8.277000000000001px;color:#e0e0e0;transform:translateX(-50%);">Table</span>
<div style="left:1023.2px;top:89.7px;width:35.299999999999955px;height:18.700000000000003px;border:1px solid #4e4842;border-radius:3px;background:#2d2d2d;"></div>
<span class="t" style="left:1040.85px;top:94.01px;font-size:8.9px;color:#e0e0e0;transform:translateX(-50%);">Plot</span>
<div style="left:982px;top:112.3px;width:78px;height:1px;background:#4a4440;"></div>
<div style="left:982px;top:118.5px;width:78px;height:8.5px;background:#0c0c0c;"></div>
<span class="t" style="left:985.5px;top:117.74px;font-size:8.6px;color:#d8d020;">Power 1</span>
<svg style="left:1027px;top:120px" width="31" height="7" viewBox="0 0 31 7"><path d="M1.5 0.6H19L15.5 6.4H1.5a1.8 2.9 0 0 1 0-5.8z" fill="#e6e020"/><path d="M19.5 0.6H28.5a1.8 2.9 0 0 1 0 5.8H16z" fill="#28b4c8"/><text x="9" y="5.8" font-size="5.5" fill="#444">1</text><text x="23" y="5.8" font-size="5.5" fill="#1a5a66">2</text></svg>
<div style="left:981.7px;top:126.8px;width:78.3px;height:90.2px;background:#c6c6c6;overflow:hidden;"></div>
<span class="t" style="left:986px;top:129.38px;font-size:8.7px;color:#1e1e1e;">Magnetic Property</span>
<span class="t" style="left:986px;top:139.08px;font-size:8.7px;color:#1e1e1e;">Bpeak:</span>
<div style="left:1016.3px;top:138.3px;width:43.5px;height:12px;overflow:hidden;"><span class="t" style="left:0;top:0.8px;font-size:8.7px;color:#1e1e1e;">5.944 μT</span></div>
<span class="t" style="left:986px;top:148.78px;font-size:8.7px;color:#1e1e1e;">Br:</span>
<div style="left:1016.3px;top:148.0px;width:43.5px;height:12px;overflow:hidden;"><span class="t" style="left:0;top:0.8px;font-size:8.7px;color:#1e1e1e;">-1.489 μT</span></div>
<span class="t" style="left:986px;top:158.48px;font-size:8.7px;color:#1e1e1e;">Hc:</span>
<div style="left:1016.3px;top:157.7px;width:43.5px;height:12px;overflow:hidden;"><span class="t" style="left:0;top:0.8px;font-size:8.7px;color:#1e1e1e;">4.706 mAT/m</span></div>
<span class="t" style="left:986px;top:168.18px;font-size:8.7px;color:#1e1e1e;">H<span style="position:static;font-size:5.5px;vertical-align:-2px">max</span></span>
<div style="left:1016.3px;top:167.4px;width:43.5px;height:12px;overflow:hidden;"><span class="t" style="left:0;top:0.8px;font-size:8.7px;color:#1e1e1e;">99.95 mAT/m</span></div>
<span class="t" style="left:986px;top:177.88px;font-size:8.7px;color:#1e1e1e;">I-Ripple</span>
<div style="left:1016.3px;top:177.1px;width:43.5px;height:12px;overflow:hidden;"><span class="t" style="left:0;top:0.8px;font-size:8.7px;color:#1e1e1e;">213.1 mA</span></div>
<span class="t" style="left:986px;top:187.58px;font-size:8.7px;color:#1e1e1e;">ΔB:</span>
<div style="left:1016.3px;top:186.8px;width:43.5px;height:12px;overflow:hidden;"><span class="t" style="left:0;top:0.8px;font-size:8.7px;color:#1e1e1e;">11.3 μT</span></div>
<span class="t" style="left:986px;top:197.28px;font-size:8.7px;color:#1e1e1e;">ΔH:</span>
<div style="left:1016.3px;top:196.5px;width:43.5px;height:12px;overflow:hidden;"><span class="t" style="left:0;top:0.8px;font-size:8.7px;color:#1e1e1e;">179 mAT/m</span></div>
<span class="t" style="left:986px;top:206.98px;font-size:8.7px;color:#1e1e1e;">Perm...:</span>
<div style="left:1016.3px;top:206.2px;width:43.5px;height:12px;overflow:hidden;"><span class="t" style="left:0;top:0.8px;font-size:8.7px;color:#1e1e1e;">48.77 H/m</span></div>
<svg style="left:971.5px;top:266px" width="8" height="22" viewBox="0 0 8 22"><circle cx="4" cy="4" r="1.1" fill="#ddd"/><circle cx="4" cy="8.6" r="1.1" fill="#ddd"/><circle cx="4" cy="13.2" r="1.1" fill="#ddd"/></svg>
<div style="left:982px;top:495.8px;width:78px;height:1px;background:#4a4440;"></div>
<div style="left:983.8px;top:500.6px;width:34px;height:17.8px;border:1px solid #4e4842;border-radius:3px;background:#2d2d2d;"></div>
<svg style="left:983px;top:500px" width="78" height="20" viewBox="983 500 78 20"><path d="M997 503v9h4" stroke="#bbb" stroke-width="1" stroke-dasharray="1.5 1.5" fill="none"/><circle cx="1003.3" cy="511.5" r="2.6" stroke="#ddd" stroke-width="1.1" fill="none"/><path d="M1005 513.3l2.6 2.6" stroke="#ddd" stroke-width="1.5"/><path d="M1035.5 504h11M1036.5 504.5l1 10.5a1 1 0 0 0 1 1h7a1 1 0 0 0 1-1l1-10.5" stroke="#cfcfcf" stroke-width="1.1" fill="none"/><path d="M1038.5 503.3a2.5 1.3 0 0 1 5 0h-5" stroke="#cfcfcf" stroke-width="1" fill="none"/><path d="M1039.5 506.5v7.5M1041 506.5v7.5M1042.5 506.5v7.5M1044 506.5v7.5" stroke="#bdbdbd" stroke-width="0.7"/></svg>
<div style="left:10px;top:386.3px;width:961px;height:131.7px;background:#8c8c8c;"></div>
<div style="left:12px;top:388.7px;width:957px;height:12.3px;background:#353535;"></div>
<div style="left:12px;top:401px;width:957px;height:14px;background:#a8a8a8;"></div>
<div style="left:12px;top:415px;width:957px;height:80px;background:#ffffff;"></div>
<div style="left:12px;top:495px;width:957px;height:13px;background:#d3d3d3;"></div>
<div style="left:12px;top:508px;width:957px;height:9px;background:#ffffff;"></div>
<span class="t" style="left:19px;top:389.68px;font-size:9.2px;color:#dcdcdc;">Measurement Results</span>
<svg style="left:10px;top:387px;" width="961" height="131" viewBox="10 387 961 131">
<path d="M957 391.5l6 6M963 391.5l-6 6" stroke="#c8c8c8" stroke-width="1.2"/>
<path d="M67.2 401V415M178.1 401V415M262.9 401V415M320.5 401V415M391.4 401V415M464.0 401V415M535.3 401V415M590.8 401V415M645.5 401V415M700.4 401V415M772.8 401V415M844.4 401V415M916.0 401V415" stroke="#c4c4c4" stroke-width="1"/>
<path d="M67.2 415V495M178.1 415V495M262.9 415V495M320.5 415V495M391.4 415V495M464.0 415V495M535.3 415V495M590.8 415V495M645.5 415V495M700.4 415V495M772.8 415V495M844.4 415V495M916.0 415V495" stroke="#d4d4d4" stroke-width="1"/>
</svg>
<span class="t" style="left:13.5px;top:403.02px;font-size:8.8px;color:#e2e2e2;">Name</span>
<span class="t" style="left:68.5px;top:403.02px;font-size:8.8px;color:#e2e2e2;">Meas</span>
<span class="t" style="left:179.7px;top:403.02px;font-size:8.8px;color:#e2e2e2;">Label</span>
<span class="t" style="left:264.5px;top:403.02px;font-size:8.8px;color:#e2e2e2;">Src(s)</span>
<span class="t" style="left:322px;top:403.02px;font-size:8.8px;color:#e2e2e2;">Mean'</span>
<span class="t" style="left:393.4px;top:403.02px;font-size:8.8px;color:#e2e2e2;">Min'</span>
<span class="t" style="left:464.8px;top:403.02px;font-size:8.8px;color:#e2e2e2;">Max'</span>
<span class="t" style="left:537px;top:403.02px;font-size:8.8px;color:#e2e2e2;">Std Dev'</span>
<span class="t" style="left:592.4px;top:403.02px;font-size:8.8px;color:#e2e2e2;">Pop'</span>
<span class="t" style="left:702.4px;top:403.02px;font-size:8.8px;color:#e2e2e2;">Mean</span>
<span class="t" style="left:774.8px;top:403.02px;font-size:8.8px;color:#e2e2e2;">Min</span>
<span class="t" style="left:846.5px;top:403.02px;font-size:8.8px;color:#e2e2e2;">Max</span>
<span class="t" style="left:918px;top:403.02px;font-size:8.8px;color:#e2e2e2;">Std Dev</span>
<span class="t" style="left:14.8px;top:417.99px;font-size:8.9px;line-height:9.23px;color:#1a1a1a;">Power 1</span>
<span class="t" style="left:70.3px;top:417.99px;font-size:8.9px;line-height:9.23px;color:#1a1a1a;">MP: Bpeak<br>MP: Br<br>MP: Hc<br>MP: Hmax<br>MP: I-Ripple<br>MP: ΔB<br>MP: ΔH<br>MP: Perm...</span>
<span class="t" style="left:180.3px;top:417.99px;font-size:8.9px;line-height:9.23px;color:#1a1a1a;">Magnetic Property</span>
<span class="t" style="left:265.9px;top:417.99px;font-size:8.9px;line-height:9.23px;color:#1a1a1a;">Ch 1, Ch 2</span>
<span class="t" style="left:322.8px;top:417.99px;font-size:8.9px;line-height:9.23px;color:#1a1a1a;">5.9444 μT<br>-1.4888 μT<br>4.7063 mAT/m<br>99.952 mAT/m<br>213.12 mA<br>11.297 μT<br>179.01 mAT/m<br>48.773 H/m</span>
<span class="t" style="left:394px;top:417.99px;font-size:8.9px;line-height:9.23px;color:#1a1a1a;">5.5808 μT<br>-1.4888 μT<br>4.7063 mAT/m<br>99.952 mAT/m<br>210.43 mA<br>11.297 μT<br>179.01 mAT/m<br>48.773 H/m</span>
<span class="t" style="left:465.5px;top:417.99px;font-size:8.9px;line-height:9.23px;color:#1a1a1a;">6.2564 μT<br>-1.4888 μT<br>4.7063 mAT/m<br>99.952 mAT/m<br>217.06 mA<br>11.297 μT<br>179.01 mAT/m<br>48.773 H/m</span>
<span class="t" style="left:537.6px;top:417.99px;font-size:8.9px;line-height:9.23px;color:#1a1a1a;">206.42 nT<br>0 T<br>0 AT/m<br>0 AT/m<br>1.7648 mA<br>0 T<br>0 AT/m<br>0 H/m</span>
<span class="t" style="left:593.3px;top:417.99px;font-size:8.9px;line-height:9.23px;color:#1a1a1a;">15<br>1<br>1<br>1<br>15<br>1<br>1<br>1</span>
<span class="t" style="left:703.5px;top:417.99px;font-size:8.9px;line-height:9.23px;color:#1a1a1a;">5.9444 μT<br>-1.4888 μT<br>4.7063 mAT/m<br>99.952 mAT/m<br>213.12 mA<br>11.297 μT<br>179.01 mAT/m<br>48.773 H/m</span>
<span class="t" style="left:775.5px;top:417.99px;font-size:8.9px;line-height:9.23px;color:#1a1a1a;">5.5808 μT<br>-1.4888 μT<br>4.7063 mAT/m<br>99.952 mAT/m<br>210.43 mA<br>11.297 μT<br>179.01 mAT/m<br>48.773 H/m</span>
<span class="t" style="left:847px;top:417.99px;font-size:8.9px;line-height:9.23px;color:#1a1a1a;">6.2564 μT<br>-1.4888 μT<br>4.7063 mAT/m<br>99.952 mAT/m<br>217.06 mA<br>11.297 μT<br>179.01 mAT/m<br>48.773 H/m</span>
<span class="t" style="left:918.8px;top:417.99px;font-size:8.9px;line-height:9.23px;color:#1a1a1a;">206.42 nT<br>0 T<br>0 AT/m<br>0 AT/m<br>1.7648 mA<br>0 T<br>0 AT/m<br>0 H/m</span>
<div style="left:10px;top:517px;width:961px;height:3.3px;background:#c6c6c6;"></div>
<div style="left:10px;top:520.3px;width:961px;height:1.7px;background:#7c7c7c;"></div>
<div style="left:598px;top:517px;width:62px;height:1.2px;background:#8a8a8a;"></div>
<div style="left:10px;top:522px;width:1051.6px;height:44px;background:#2b2b2b;"></div>
<div style="left:10px;top:566px;width:1053.2px;height:4.3px;background:#c6d0e0;"></div>
<div style="left:10px;top:566px;width:10px;height:4.3px;background:#dde4ee;"></div>
<div style="left:12.4px;top:524.5px;width:49.2px;height:40.5px;background:#c8c8c8;border-radius:2px;overflow:hidden;"><div style="left:0;top:0;width:100%;height:10px;background:#f4ec28;"></div></div>
<span class="t" style="left:15.9px;top:524.40px;font-size:8.5px;color:#2a2a10;">Ch 1</span>
<span class="t" style="left:15.9px;top:535.40px;font-size:8.5px;color:#1e1e1e;">2.2 V/div</span>
<span class="t" style="left:15.9px;top:545.00px;font-size:8.5px;color:#1e1e1e;">1 MΩ</span>
<span class="t" style="left:15.9px;top:554.60px;font-size:8.5px;color:#1e1e1e;">100 MHz</span>
<div style="left:64.8px;top:524.5px;width:48.8px;height:40.5px;background:#c8c8c8;border-radius:2px;overflow:hidden;"><div style="left:0;top:0;width:100%;height:10px;background:#1c4848;"></div></div>
<span class="t" style="left:68.3px;top:524.40px;font-size:8.5px;color:#40c8d0;">Ch 2</span>
<span class="t" style="left:68.3px;top:535.40px;font-size:8.5px;color:#1e1e1e;">33 mA/div</span>
<span class="t" style="left:68.3px;top:545.00px;font-size:8.5px;color:#1e1e1e;">1 MΩ</span>
<span class="t" style="left:68.3px;top:554.60px;font-size:8.5px;color:#1e1e1e;">120 MHz</span>
<div style="left:116.3px;top:524.5px;width:49.2px;height:40.5px;background:#7c7c7c;border-radius:2px;overflow:hidden;"><div style="left:0;top:0;width:100%;height:10px;background:#8a5a24;"></div></div>
<span class="t" style="left:119.8px;top:524.40px;font-size:8.5px;color:#5a3a18;">Math 1</span>
<span class="t" style="left:119.8px;top:535.40px;font-size:8.5px;color:#5c5c5c;">1 V/div</span>
<span class="t" style="left:119.8px;top:545.00px;font-size:8.5px;color:#5c5c5c;">Ch2</span>
<span class="t" style="left:119.8px;top:554.60px;font-size:8.5px;color:#5c5c5c;">Power 1</span>
<svg style="left:0;top:0" width="1071" height="577"><path d="M53.5 557.5h2v3h3" stroke="#222" stroke-width="1" fill="none"/><path d="M105.5 557.5h2v3h3" stroke="#222" stroke-width="1" fill="none"/></svg>
<div style="left:411.4px;top:524.8px;width:21.0px;height:40.6px;border:1px solid #4a4a4a;border-radius:3px;background:#2a2a2a;"></div>
<div style="left:414.4px;top:527.6px;width:15.0px;height:1.8px;background:#c03848;"></div>
<span class="t" style="left:421.9px;top:539.20px;font-size:10.5px;color:#e0e0e0;transform:translateX(-50%);">3</span>
<div style="left:435.8px;top:524.8px;width:21.19999999999999px;height:40.6px;border:1px solid #4a4a4a;border-radius:3px;background:#2a2a2a;"></div>
<div style="left:438.8px;top:527.6px;width:15.199999999999989px;height:1.8px;background:#80b030;"></div>
<span class="t" style="left:446.4px;top:539.20px;font-size:10.5px;color:#e0e0e0;transform:translateX(-50%);">4</span>
<div style="left:460.4px;top:524.8px;width:21.0px;height:40.6px;border:1px solid #4a4a4a;border-radius:3px;background:#2a2a2a;"></div>
<div style="left:463.4px;top:527.6px;width:15.0px;height:1.8px;background:#d08030;"></div>
<span class="t" style="left:470.9px;top:539.20px;font-size:10.5px;color:#e0e0e0;transform:translateX(-50%);">5</span>
<div style="left:485px;top:524.8px;width:21px;height:40.6px;border:1px solid #4a4a4a;border-radius:3px;background:#2a2a2a;"></div>
<div style="left:488px;top:527.6px;width:15px;height:1.8px;background:#3030a8;"></div>
<span class="t" style="left:495.5px;top:539.20px;font-size:10.5px;color:#e0e0e0;transform:translateX(-50%);">6</span>
<div style="left:509.4px;top:524.8px;width:21.100000000000023px;height:40.6px;border:1px solid #4a4a4a;border-radius:3px;background:#2a2a2a;"></div>
<div style="left:512.4px;top:527.6px;width:15.100000000000023px;height:1.8px;background:#c04888;"></div>
<span class="t" style="left:519.95px;top:539.20px;font-size:10.5px;color:#e0e0e0;transform:translateX(-50%);">7</span>
<div style="left:534px;top:524.8px;width:22px;height:40.6px;border:1px solid #4a4a4a;border-radius:3px;background:#2a2a2a;"></div>
<div style="left:537px;top:527.6px;width:16px;height:1.8px;background:#20a878;"></div>
<span class="t" style="left:545.0px;top:539.20px;font-size:10.5px;color:#e0e0e0;transform:translateX(-50%);">8</span>
<div style="left:560.8px;top:524px;width:1px;height:42px;background:#444;"></div>
<div style="left:568.3px;top:524.8px;width:21.0px;height:40.6px;border:1px solid #4a4a4a;border-radius:3px;background:#2a2a2a;"></div>
<div style="left:571.3px;top:527.6px;width:15.0px;height:1.8px;background:#602880;"></div>
<span class="t" style="left:578.8px;top:532.14px;font-size:8.6px;color:#e0e0e0;transform:translateX(-50%);">Add</span>
<span class="t" style="left:578.8px;top:539.74px;font-size:8.6px;color:#e0e0e0;transform:translateX(-50%);">New</span>
<span class="t" style="left:578.8px;top:547.34px;font-size:8.6px;color:#e0e0e0;transform:translateX(-50%);">Math</span>
<div style="left:592.6px;top:524.8px;width:21.399999999999977px;height:40.6px;border:1px solid #4a4a4a;border-radius:3px;background:#2a2a2a;"></div>
<div style="left:595.6px;top:527.6px;width:15.399999999999977px;height:1.8px;background:#909090;"></div>
<span class="t" style="left:603.3px;top:532.14px;font-size:8.6px;color:#e0e0e0;transform:translateX(-50%);">Add</span>
<span class="t" style="left:603.3px;top:539.74px;font-size:8.6px;color:#e0e0e0;transform:translateX(-50%);">New</span>
<span class="t" style="left:603.3px;top:547.34px;font-size:8.6px;color:#e0e0e0;transform:translateX(-50%);">Ref</span>
<div style="left:617.3px;top:524.8px;width:21.0px;height:40.6px;border:1px solid #4a4a4a;border-radius:3px;background:#2a2a2a;"></div>
<div style="left:620.3px;top:527.6px;width:15.0px;height:1.8px;background:#9050c8;"></div>
<span class="t" style="left:627.8px;top:532.14px;font-size:8.6px;color:#e0e0e0;transform:translateX(-50%);">Add</span>
<span class="t" style="left:627.8px;top:539.74px;font-size:8.6px;color:#e0e0e0;transform:translateX(-50%);">New</span>
<span class="t" style="left:627.8px;top:547.34px;font-size:8.6px;color:#e0e0e0;transform:translateX(-50%);">Bus</span>
<div style="left:644.2px;top:524px;width:1px;height:42px;background:#444;"></div>
<div style="left:650.3px;top:524.8px;width:21.700000000000045px;height:40.6px;border:1px solid #4a4a4a;border-radius:3px;background:#2a2a2a;"></div>
<div style="left:653.3px;top:527.6px;width:15.700000000000045px;height:1.8px;background:#404040;"></div>
<span class="t" style="left:661.15px;top:540.10px;font-size:9px;color:#e0e0e0;transform:translateX(-50%);">DVM</span>
<div style="left:677.5px;top:524.8px;width:22.5px;height:40.6px;border:1px solid #4a4a4a;border-radius:3px;background:#2a2a2a;"></div>
<div style="left:680.5px;top:527.6px;width:16.5px;height:1.8px;background:#404040;"></div>
<span class="t" style="left:688.75px;top:540.10px;font-size:9px;color:#e0e0e0;transform:translateX(-50%);">AFG</span>
<div style="left:705.2px;top:524px;width:1px;height:42px;background:#444;"></div>
<div style="left:535px;top:565.5px;width:3px;height:4px;background:#fff;"></div>
<div style="left:711.2px;top:524.3px;width:109.79999999999995px;height:40.7px;background:#c8c8c8;border-radius:2px;overflow:hidden;"><div style="left:0;top:0;width:100%;height:9.5px;background:#505050;"></div></div>
<span class="t" style="left:714.7px;top:524.02px;font-size:8.8px;color:#d8d8d8;">Horizontal</span>
<span class="t" style="left:715.3px;top:535.88px;font-size:8.2px;color:#1e1e1e;">8 μs/div</span>
<span class="t" style="left:773.2px;top:535.88px;font-size:8.2px;color:#1e1e1e;">80 μs</span>
<span class="t" style="left:715.3px;top:545.38px;font-size:8.2px;color:#1e1e1e;">SR: 12.5 MS/s</span>
<span class="t" style="left:773.2px;top:545.38px;font-size:8.2px;color:#1e1e1e;">80 ns/pt</span>
<span class="t" style="left:715.3px;top:554.88px;font-size:8.2px;color:#1e1e1e;">RL: 1 kpts</span>
<span class="t" style="left:773.2px;top:554.88px;font-size:8.2px;color:#1e1e1e;">    50%</span>
<svg style="left:770px;top:555px" width="10" height="10" viewBox="0 0 10 10"><path d="M2 1.5h5v4l-2.5 2.5l-2.5-2.5z" fill="#e07818"/><rect x="3.5" y="3" width="2" height="2" fill="#fff"/></svg>
<div style="left:826.5px;top:524.3px;width:86.5px;height:40.7px;background:#c8c8c8;border-radius:2px;overflow:hidden;"><div style="left:0;top:0;width:100%;height:9.5px;background:#505050;"></div></div>
<span class="t" style="left:830.0px;top:524.02px;font-size:8.8px;color:#d8d8d8;">Trigger</span>
<div style="left:830.3px;top:537px;width:16.3px;height:8px;background:#f0e628;border:1px solid #555;border-radius:4px;"></div>
<span class="t" style="left:836.3px;top:536.20px;font-size:8px;color:#222;">1</span>
<svg style="left:850px;top:536px" width="14" height="10" viewBox="0 0 14 10"><path d="M2 9l4 -1l3 -6l3 -1" stroke="#5a5aa8" stroke-width="1" fill="none"/></svg>
<span class="t" style="left:866.2px;top:535.90px;font-size:8.5px;color:#1e1e1e;">2.46 V</span>
<span class="t" style="left:830.3px;top:545.72px;font-size:8.3px;color:#1e1e1e;">Noise Reject</span>
<div style="left:920px;top:524.3px;width:81.5px;height:40.7px;background:#c8c8c8;border-radius:2px;overflow:hidden;"><div style="left:0;top:0;width:100%;height:9.5px;background:#505050;"></div></div>
<span class="t" style="left:923.5px;top:524.02px;font-size:8.8px;color:#d8d8d8;">Acquisition</span>
<span class="t" style="left:924px;top:535.82px;font-size:8.3px;color:#1e1e1e;">Manual,</span>
<span class="t" style="left:965px;top:535.82px;font-size:8.3px;color:#1e1e1e;">Analyze</span>
<span class="t" style="left:924px;top:545.52px;font-size:8.3px;color:#1e1e1e;">Sample: 12 bits</span>
<span class="t" style="left:924px;top:555.02px;font-size:8.3px;color:#1e1e1e;">2.301 kAcqs</span>
<div style="left:1007.5px;top:524.4px;width:48.8px;height:17.3px;background:#ee1c25;border-radius:2px;"></div>
<span class="t" style="left:1031.9px;top:528.20px;font-size:8px;color:#ffffff;transform:translateX(-50%);">Stopped</span>
<div style="left:1007px;top:546.2px;width:49.3px;height:18.6px;background:#c8c8c8;border-radius:2px;"></div>
<span class="t" style="left:1031.6px;top:545.98px;font-size:8.7px;color:#1e1e1e;transform:translateX(-50%);">10 Apr 2018</span>
<span class="t" style="left:1031.6px;top:554.58px;font-size:8.7px;color:#1e1e1e;transform:translateX(-50%);">3:36:39 AM</span>
</body></html>
